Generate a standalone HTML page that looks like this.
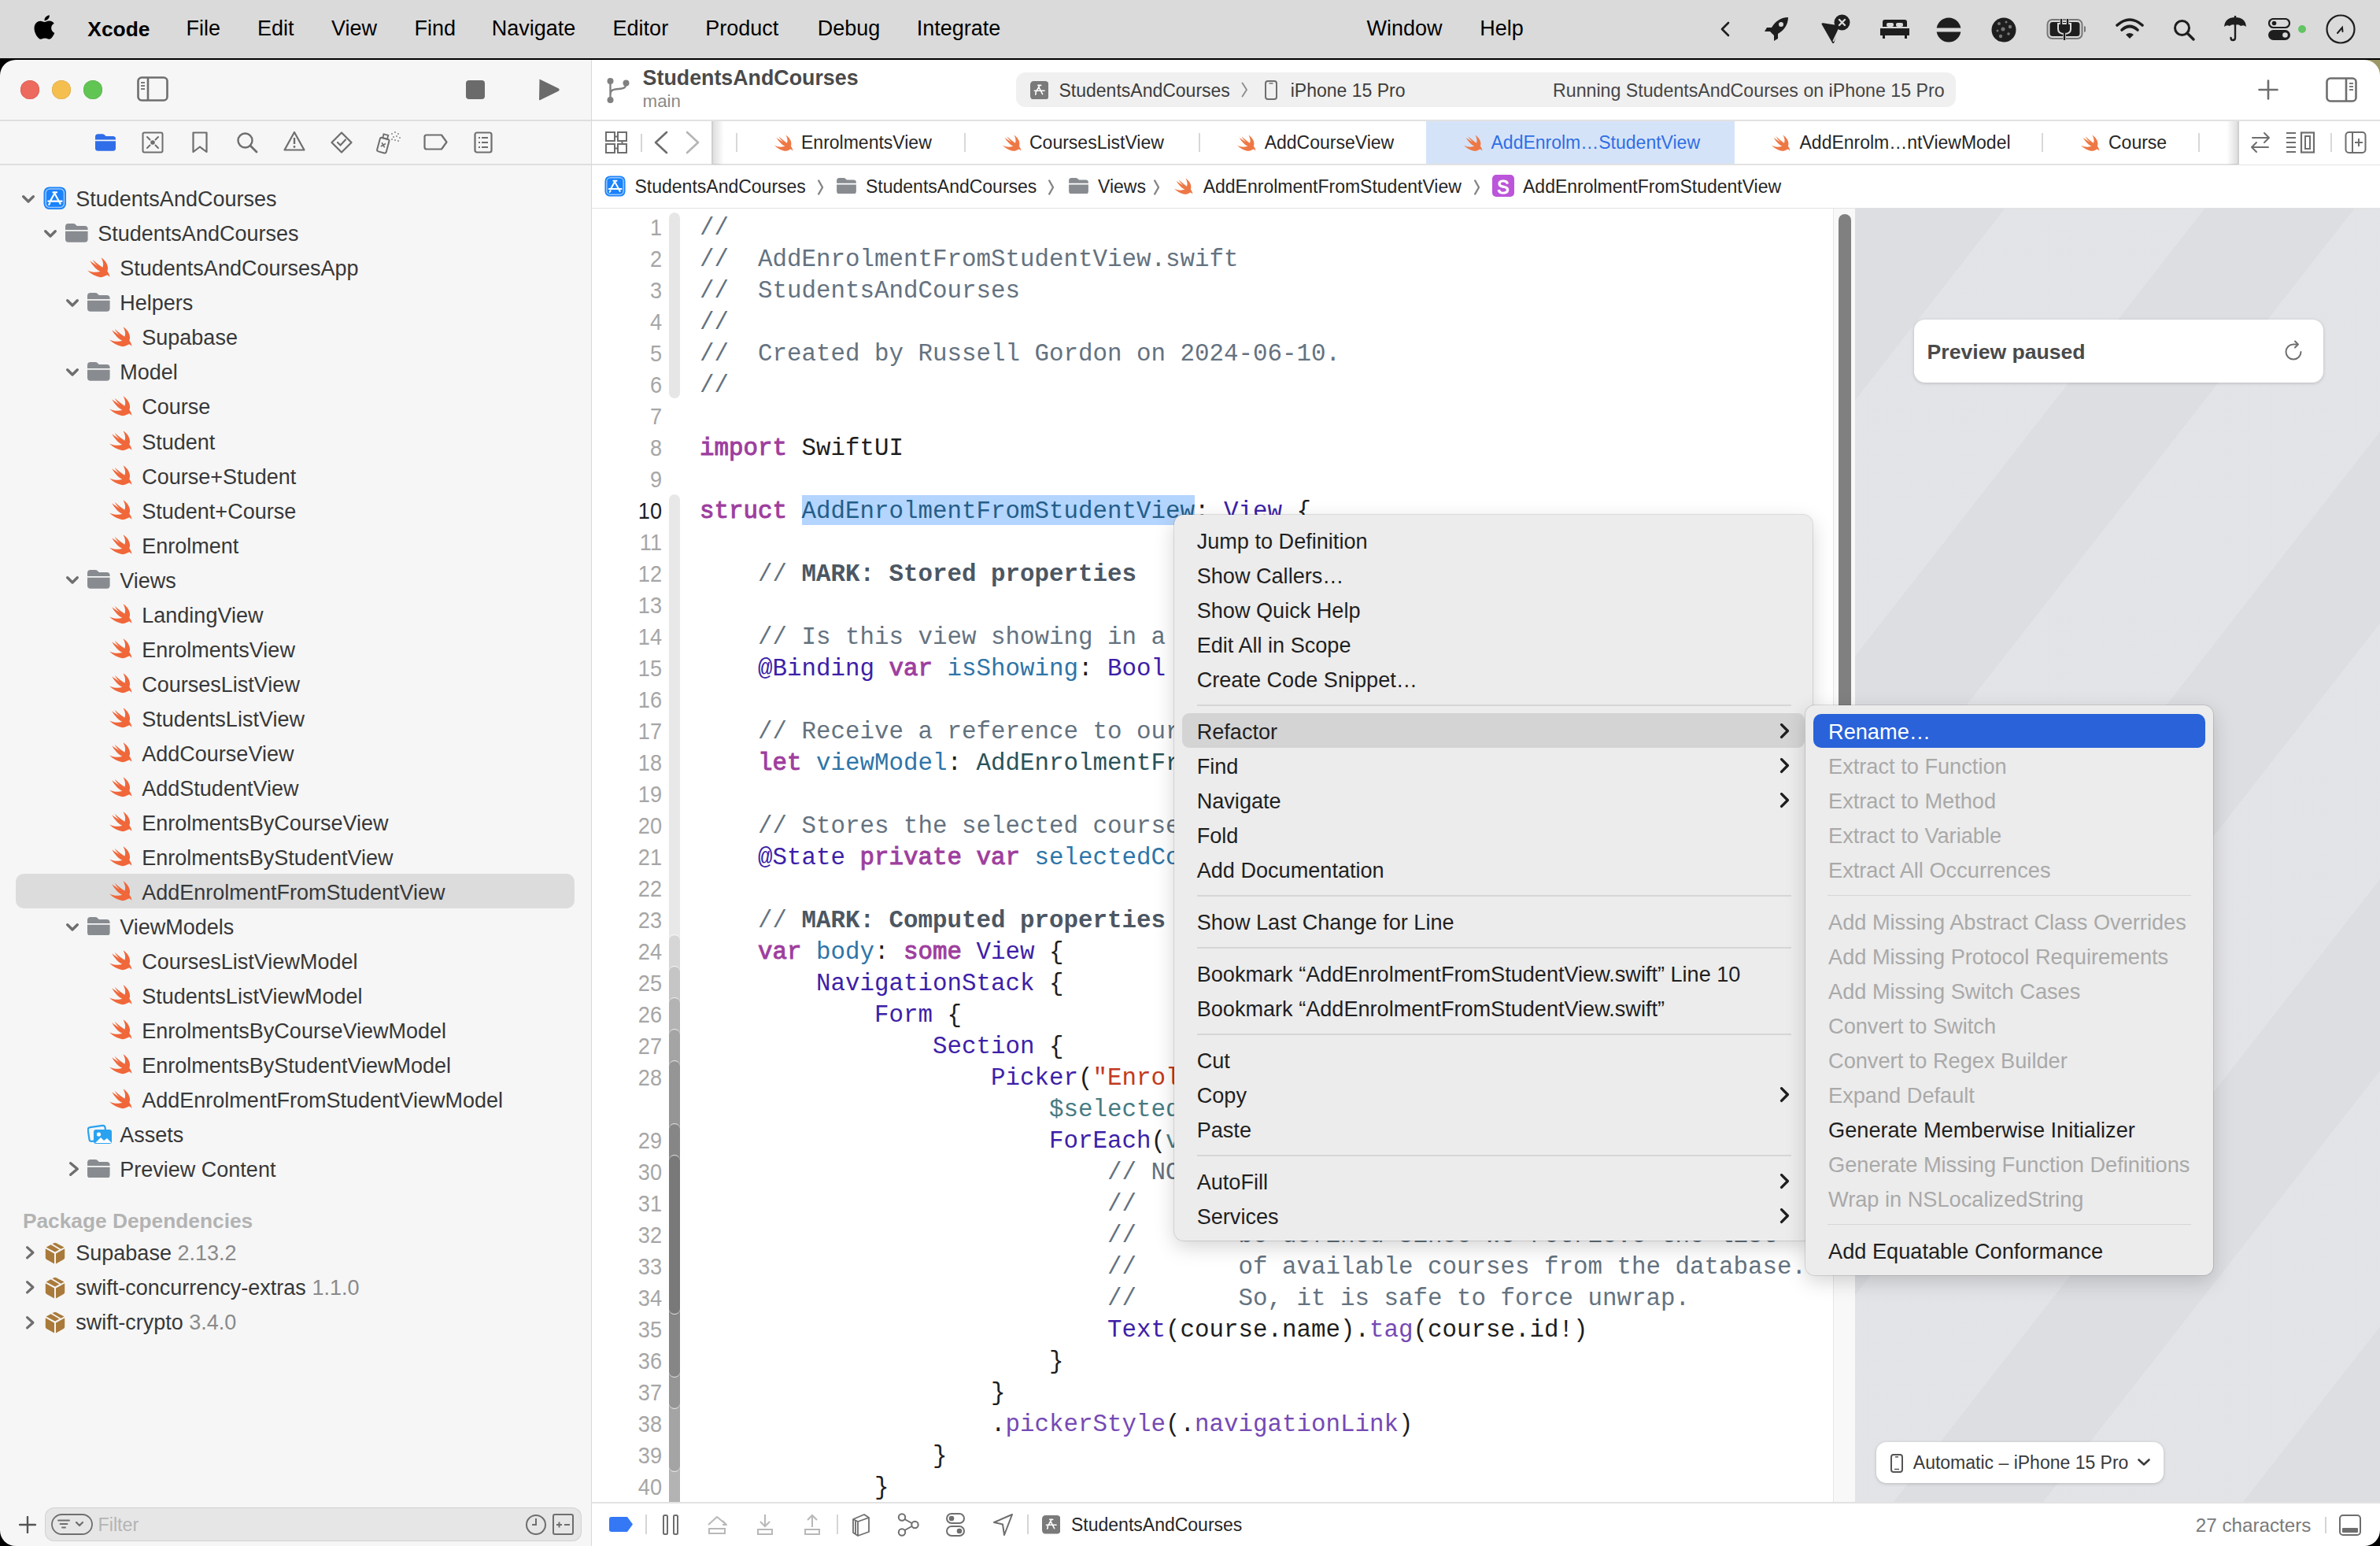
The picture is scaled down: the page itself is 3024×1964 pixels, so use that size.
<!DOCTYPE html><html><head><meta charset="utf-8"><style>html,body{margin:0;padding:0;width:3024px;height:1964px;overflow:hidden;background:#000;}.t{position:absolute;white-space:pre;}.r{position:absolute;}</style></head><body>
<div class="r" style="left:2900.0px;top:60.0px;width:124.0px;height:80.0px;background:#9c9868;"></div>
<div class="r" style="left:0.0px;top:0.0px;width:3024.0px;height:73.5px;background:#dadada;"></div>
<svg class="r" style="left:39.9px;top:17.3px;overflow:visible" width="30.5" height="34.9" viewBox="0 0 27 32" preserveAspectRatio="none"><path fill="#000" d="M22.3,17.1c0-3.6,3-5.3,3.1-5.4c-1.7-2.5-4.3-2.8-5.2-2.9c-2.2-0.2-4.3,1.3-5.4,1.3c-1.1,0-2.8-1.3-4.7-1.2c-2.4,0-4.6,1.4-5.8,3.5c-2.5,4.3-0.6,10.7,1.8,14.2c1.2,1.7,2.6,3.6,4.4,3.5c1.8-0.1,2.4-1.1,4.6-1.1c2.1,0,2.7,1.1,4.6,1.1c1.9,0,3.1-1.7,4.3-3.5c1.4-2,1.9-3.9,1.9-4C25.9,22.6,22.3,21.2,22.3,17.1z M18.8,6.5c1-1.2,1.6-2.8,1.4-4.5c-1.4,0.1-3.1,0.9-4.1,2.1c-0.9,1-1.7,2.7-1.5,4.3C16.2,8.6,17.8,7.7,18.8,6.5z"/></svg>
<div class="t" style="left:111.3px;top:19.9px;font-family:'Liberation Sans', sans-serif;font-size:26.4px;line-height:34px;color:#000;font-weight:700;">Xcode</div>
<div class="t" style="left:236.6px;top:19.1px;font-family:'Liberation Sans', sans-serif;font-size:27px;line-height:35px;color:#000;font-weight:400;">File</div>
<div class="t" style="left:326.9px;top:19.1px;font-family:'Liberation Sans', sans-serif;font-size:27px;line-height:35px;color:#000;font-weight:400;">Edit</div>
<div class="t" style="left:421.0px;top:19.1px;font-family:'Liberation Sans', sans-serif;font-size:27px;line-height:35px;color:#000;font-weight:400;">View</div>
<div class="t" style="left:526.5px;top:19.1px;font-family:'Liberation Sans', sans-serif;font-size:27px;line-height:35px;color:#000;font-weight:400;">Find</div>
<div class="t" style="left:624.8px;top:19.1px;font-family:'Liberation Sans', sans-serif;font-size:27px;line-height:35px;color:#000;font-weight:400;">Navigate</div>
<div class="t" style="left:778.6px;top:19.1px;font-family:'Liberation Sans', sans-serif;font-size:27px;line-height:35px;color:#000;font-weight:400;">Editor</div>
<div class="t" style="left:896.2px;top:19.1px;font-family:'Liberation Sans', sans-serif;font-size:27px;line-height:35px;color:#000;font-weight:400;">Product</div>
<div class="t" style="left:1038.7px;top:19.1px;font-family:'Liberation Sans', sans-serif;font-size:27px;line-height:35px;color:#000;font-weight:400;">Debug</div>
<div class="t" style="left:1164.7px;top:19.1px;font-family:'Liberation Sans', sans-serif;font-size:27px;line-height:35px;color:#000;font-weight:400;">Integrate</div>
<div class="t" style="left:1736.6px;top:19.1px;font-family:'Liberation Sans', sans-serif;font-size:27px;line-height:35px;color:#000;font-weight:400;">Window</div>
<div class="t" style="left:1880.3px;top:19.1px;font-family:'Liberation Sans', sans-serif;font-size:27px;line-height:35px;color:#000;font-weight:400;">Help</div>
<div class="r" style="left:0.0px;top:73.5px;width:3024.0px;height:3.0px;background:#000;"></div>
<div class="r" style="left:0.0px;top:76.0px;width:751.0px;height:1888.0px;background:#f6f6f6;"></div>
<div class="r" style="left:751.0px;top:76.0px;width:1.0px;height:1888.0px;background:#d9d9d9;"></div>
<div class="r" style="left:752.0px;top:76.0px;width:2272.0px;height:1888.0px;background:#ffffff;"></div>
<div class="r" style="left:26px;top:102px;width:24px;height:24px;border-radius:12px;background:#ec6a5e;box-shadow:inset 0 0 0 0.5px #d25545"></div>
<div class="r" style="left:66px;top:102px;width:24px;height:24px;border-radius:12px;background:#f4bf4f;box-shadow:inset 0 0 0 0.5px #d6a243"></div>
<div class="r" style="left:106px;top:102px;width:24px;height:24px;border-radius:12px;background:#61c554;box-shadow:inset 0 0 0 0.5px #52a842"></div>
<svg class="r" style="left:174.0px;top:97.0px;" width="40" height="32" viewBox="0 0 40 32"><rect x="1.5" y="1.5" width="37" height="29" rx="4.5" fill="none" stroke="#6e6e6e" stroke-width="2.6"/><line x1="14" y1="2" x2="14" y2="30" stroke="#6e6e6e" stroke-width="2.6"/><line x1="5" y1="8" x2="10" y2="8" stroke="#6e6e6e" stroke-width="1.8"/><line x1="5" y1="12" x2="10" y2="12" stroke="#6e6e6e" stroke-width="1.8"/><line x1="5" y1="16" x2="10" y2="16" stroke="#6e6e6e" stroke-width="1.8"/></svg>
<div class="r" style="left:592.0px;top:101.8px;width:24.0px;height:24.2px;background:#6b6b6b;border-radius:4px"></div>
<svg class="r" style="left:684.0px;top:100.0px;" width="28" height="28" viewBox="0 0 28 28"><path d="M1.5,1.5 Q0.8,0.3 2.5,1 L26,12.5 Q27.5,14 26,15.5 L2.5,27 Q0.8,27.8 1,26 Z" fill="#6b6b6b"/></svg>
<div class="r" style="left:0.0px;top:152.0px;width:751.0px;height:1.5px;background:#dedede;"></div>
<div class="r" style="left:0.0px;top:208.0px;width:751.0px;height:1.5px;background:#dedede;"></div>
<svg class="r" style="left:121.0px;top:169.9px;" width="26" height="22" viewBox="0 0 29 24"><path fill="#2f6ee8" d="M0,4 Q0,0 4,0 L10,0 Q12,0 13.5,1.5 L15,3 L25,3 Q29,3 29,7 L29,8 L0,8 Z"/><path fill="#2f6ee8" d="M0,10 L29,10 L29,20 Q29,24 25,24 L4,24 Q0,24 0,20 Z"/></svg>
<svg class="r" style="left:180.0px;top:167.0px;" width="28" height="28" viewBox="0 0 28 28"><rect x="1.5" y="1.5" width="25" height="25" rx="2" fill="none" stroke="#6e6e6e" stroke-width="2"/><circle cx="14" cy="14" r="2.8" fill="#6e6e6e"/><path d="M7,7 L10.5,10.5 M21,7 L17.5,10.5 M7,21 L10.5,17.5 M21,21 L17.5,17.5" stroke="#6e6e6e" stroke-width="2" stroke-linecap="round"/></svg>
<svg class="r" style="left:244.0px;top:167.0px;" width="20" height="28" viewBox="0 0 20 28"><path d="M1.5,1.5 L18.5,1.5 L18.5,26 L10,19.5 L1.5,26 Z" fill="none" stroke="#6e6e6e" stroke-width="2.2" stroke-linejoin="round"/></svg>
<svg class="r" style="left:300.0px;top:167.0px;" width="28" height="28" viewBox="0 0 28 28"><circle cx="11.5" cy="11.5" r="9" fill="none" stroke="#6e6e6e" stroke-width="2.4"/><line x1="18" y1="18" x2="26" y2="26" stroke="#6e6e6e" stroke-width="2.8" stroke-linecap="round"/></svg>
<svg class="r" style="left:360.0px;top:166.0px;" width="28" height="27" viewBox="0 0 28 27"><path d="M14,2 L26.5,24.5 L1.5,24.5 Z" fill="none" stroke="#6e6e6e" stroke-width="2.2" stroke-linejoin="round"/><line x1="14" y1="9" x2="14" y2="17" stroke="#6e6e6e" stroke-width="2.4"/><circle cx="14" cy="20.5" r="1.4" fill="#6e6e6e"/></svg>
<svg class="r" style="left:420.0px;top:167.0px;" width="28" height="28" viewBox="0 0 28 28"><path d="M14,1.5 L26.5,14 L14,26.5 L1.5,14 Z" fill="none" stroke="#6e6e6e" stroke-width="2.2" stroke-linejoin="round"/><path d="M9,14 L12.5,17.5 L19,10.5" fill="none" stroke="#6e6e6e" stroke-width="2.2" stroke-linecap="round"/></svg>
<svg class="r" style="left:478.0px;top:166.0px;" width="32" height="30" viewBox="0 0 32 30"><g transform="rotate(15 10 18)"><rect x="3" y="10" width="12" height="18" rx="2" fill="none" stroke="#6e6e6e" stroke-width="2"/><rect x="6" y="5" width="6" height="5" fill="none" stroke="#6e6e6e" stroke-width="1.8"/><path d="M6.5,16 L11.5,21 M11.5,16 L6.5,21" stroke="#6e6e6e" stroke-width="1.6"/></g><g fill="#888"><circle cx="20" cy="4" r="1"/><circle cx="24" cy="2" r="1"/><circle cx="28" cy="4" r="1"/><circle cx="22" cy="8" r="1"/><circle cx="26" cy="7" r="1"/><circle cx="30" cy="9" r="1"/><circle cx="24" cy="12" r="1"/><circle cx="28" cy="13" r="1"/><circle cx="20" cy="11" r="1"/></g></svg>
<svg class="r" style="left:538.0px;top:170.0px;" width="31" height="21" viewBox="0 0 31 21"><path d="M1.5,4 Q1.5,1.5 4,1.5 L23,1.5 L29.5,10.5 L23,19.5 L4,19.5 Q1.5,19.5 1.5,17 Z" fill="none" stroke="#6e6e6e" stroke-width="2.2" stroke-linejoin="round"/></svg>
<svg class="r" style="left:602.0px;top:167.0px;" width="24" height="28" viewBox="0 0 24 28"><rect x="1.5" y="1.5" width="21" height="25" rx="2.5" fill="none" stroke="#6e6e6e" stroke-width="2.2"/><g stroke="#6e6e6e" stroke-width="2"><line x1="6" y1="8" x2="8" y2="8"/><line x1="10" y1="8" x2="18" y2="8"/><line x1="6" y1="14" x2="8" y2="14"/><line x1="10" y1="14" x2="18" y2="14"/><line x1="6" y1="20" x2="8" y2="20"/><line x1="10" y1="20" x2="18" y2="20"/></g></svg>
<div class="r" style="left:20.0px;top:1110.4px;width:710.0px;height:43.5px;background:#dcdcdc;border-radius:10px"></div>
<svg class="r" style="left:28.0px;top:247.9px;overflow:visible" width="16" height="9.7" viewBox="0 0 16 9.7"><path d="M1.7,1.7 L8.0,7.999999999999999 L14.3,1.7" fill="none" stroke="#6e6e6e" stroke-width="3.4" stroke-linecap="round" stroke-linejoin="round"/></svg>
<svg class="r" style="left:54.5px;top:237.0px;" width="29.5" height="29.5" viewBox="0 0 29 29"><rect x="0.5" y="0.5" width="28" height="28" rx="7" fill="#1a82fb"/><rect x="3" y="3" width="23" height="23" rx="5" fill="none" stroke="#fff" stroke-opacity="0.55" stroke-width="1.6"/><path d="M12.2,7.2 L16.8,7.2 M14.6,7.6 L9.2,17.2 M14.2,8.6 L21.2,21.4 M6.2,18.3 L23.2,18.3 M8.2,20.6 L7.2,22.4" stroke="#fff" stroke-width="2.1" stroke-linecap="round" fill="none"/></svg>
<div class="t" style="left:96.3px;top:236.2px;font-family:'Liberation Sans', sans-serif;font-size:27px;line-height:35px;color:#383838;font-weight:400;">StudentsAndCourses</div>
<svg class="r" style="left:56.0px;top:291.9px;overflow:visible" width="16" height="9.7" viewBox="0 0 16 9.7"><path d="M1.7,1.7 L8.0,7.999999999999999 L14.3,1.7" fill="none" stroke="#6e6e6e" stroke-width="3.4" stroke-linecap="round" stroke-linejoin="round"/></svg>
<svg class="r" style="left:83.0px;top:284.0px;" width="28.6" height="23.7" viewBox="0 0 29 24"><path fill="#888c91" d="M0,4 Q0,0 4,0 L10,0 Q12,0 13.5,1.5 L15,3 L25,3 Q29,3 29,7 L29,8 L0,8 Z"/><path fill="#888c91" d="M0,10 L29,10 L29,20 Q29,24 25,24 L4,24 Q0,24 0,20 Z"/></svg>
<div class="t" style="left:124.3px;top:280.3px;font-family:'Liberation Sans', sans-serif;font-size:27px;line-height:35px;color:#383838;font-weight:400;">StudentsAndCourses</div>
<svg class="r" style="left:111.1px;top:326.7px;overflow:visible" width="28.6" height="25.2" viewBox="0 0 1300 1145"><path fill="#f0673a" d="M0,750 C200,950 450,1080 700,1140 C850,1160 1000,1080 1150,1010 L1300,1130 C1260,980 1220,880 1150,800 C1250,600 1150,250 800,15 C920,250 950,430 880,580 C700,450 450,260 300,120 C400,300 520,430 620,520 C450,400 250,280 140,195 C300,450 500,700 740,810 C550,880 250,880 0,750 Z"/></svg>
<div class="t" style="left:152.3px;top:324.3px;font-family:'Liberation Sans', sans-serif;font-size:27px;line-height:35px;color:#383838;font-weight:400;">StudentsAndCoursesApp</div>
<svg class="r" style="left:84.0px;top:380.0px;overflow:visible" width="16" height="9.7" viewBox="0 0 16 9.7"><path d="M1.7,1.7 L8.0,7.999999999999999 L14.3,1.7" fill="none" stroke="#6e6e6e" stroke-width="3.4" stroke-linecap="round" stroke-linejoin="round"/></svg>
<svg class="r" style="left:111.0px;top:372.1px;" width="28.6" height="23.7" viewBox="0 0 29 24"><path fill="#888c91" d="M0,4 Q0,0 4,0 L10,0 Q12,0 13.5,1.5 L15,3 L25,3 Q29,3 29,7 L29,8 L0,8 Z"/><path fill="#888c91" d="M0,10 L29,10 L29,20 Q29,24 25,24 L4,24 Q0,24 0,20 Z"/></svg>
<div class="t" style="left:152.3px;top:368.3px;font-family:'Liberation Sans', sans-serif;font-size:27px;line-height:35px;color:#383838;font-weight:400;">Helpers</div>
<svg class="r" style="left:139.1px;top:414.7px;overflow:visible" width="28.6" height="25.2" viewBox="0 0 1300 1145"><path fill="#f0673a" d="M0,750 C200,950 450,1080 700,1140 C850,1160 1000,1080 1150,1010 L1300,1130 C1260,980 1220,880 1150,800 C1250,600 1150,250 800,15 C920,250 950,430 880,580 C700,450 450,260 300,120 C400,300 520,430 620,520 C450,400 250,280 140,195 C300,450 500,700 740,810 C550,880 250,880 0,750 Z"/></svg>
<div class="t" style="left:180.3px;top:412.4px;font-family:'Liberation Sans', sans-serif;font-size:27px;line-height:35px;color:#383838;font-weight:400;">Supabase</div>
<svg class="r" style="left:84.0px;top:468.1px;overflow:visible" width="16" height="9.7" viewBox="0 0 16 9.7"><path d="M1.7,1.7 L8.0,7.999999999999999 L14.3,1.7" fill="none" stroke="#6e6e6e" stroke-width="3.4" stroke-linecap="round" stroke-linejoin="round"/></svg>
<svg class="r" style="left:111.0px;top:460.2px;" width="28.6" height="23.7" viewBox="0 0 29 24"><path fill="#888c91" d="M0,4 Q0,0 4,0 L10,0 Q12,0 13.5,1.5 L15,3 L25,3 Q29,3 29,7 L29,8 L0,8 Z"/><path fill="#888c91" d="M0,10 L29,10 L29,20 Q29,24 25,24 L4,24 Q0,24 0,20 Z"/></svg>
<div class="t" style="left:152.3px;top:456.4px;font-family:'Liberation Sans', sans-serif;font-size:27px;line-height:35px;color:#383838;font-weight:400;">Model</div>
<svg class="r" style="left:139.1px;top:502.8px;overflow:visible" width="28.6" height="25.2" viewBox="0 0 1300 1145"><path fill="#f0673a" d="M0,750 C200,950 450,1080 700,1140 C850,1160 1000,1080 1150,1010 L1300,1130 C1260,980 1220,880 1150,800 C1250,600 1150,250 800,15 C920,250 950,430 880,580 C700,450 450,260 300,120 C400,300 520,430 620,520 C450,400 250,280 140,195 C300,450 500,700 740,810 C550,880 250,880 0,750 Z"/></svg>
<div class="t" style="left:180.3px;top:500.4px;font-family:'Liberation Sans', sans-serif;font-size:27px;line-height:35px;color:#383838;font-weight:400;">Course</div>
<svg class="r" style="left:139.1px;top:546.8px;overflow:visible" width="28.6" height="25.2" viewBox="0 0 1300 1145"><path fill="#f0673a" d="M0,750 C200,950 450,1080 700,1140 C850,1160 1000,1080 1150,1010 L1300,1130 C1260,980 1220,880 1150,800 C1250,600 1150,250 800,15 C920,250 950,430 880,580 C700,450 450,260 300,120 C400,300 520,430 620,520 C450,400 250,280 140,195 C300,450 500,700 740,810 C550,880 250,880 0,750 Z"/></svg>
<div class="t" style="left:180.3px;top:544.5px;font-family:'Liberation Sans', sans-serif;font-size:27px;line-height:35px;color:#383838;font-weight:400;">Student</div>
<svg class="r" style="left:139.1px;top:590.8px;overflow:visible" width="28.6" height="25.2" viewBox="0 0 1300 1145"><path fill="#f0673a" d="M0,750 C200,950 450,1080 700,1140 C850,1160 1000,1080 1150,1010 L1300,1130 C1260,980 1220,880 1150,800 C1250,600 1150,250 800,15 C920,250 950,430 880,580 C700,450 450,260 300,120 C400,300 520,430 620,520 C450,400 250,280 140,195 C300,450 500,700 740,810 C550,880 250,880 0,750 Z"/></svg>
<div class="t" style="left:180.3px;top:588.5px;font-family:'Liberation Sans', sans-serif;font-size:27px;line-height:35px;color:#383838;font-weight:400;">Course+Student</div>
<svg class="r" style="left:139.1px;top:634.9px;overflow:visible" width="28.6" height="25.2" viewBox="0 0 1300 1145"><path fill="#f0673a" d="M0,750 C200,950 450,1080 700,1140 C850,1160 1000,1080 1150,1010 L1300,1130 C1260,980 1220,880 1150,800 C1250,600 1150,250 800,15 C920,250 950,430 880,580 C700,450 450,260 300,120 C400,300 520,430 620,520 C450,400 250,280 140,195 C300,450 500,700 740,810 C550,880 250,880 0,750 Z"/></svg>
<div class="t" style="left:180.3px;top:632.5px;font-family:'Liberation Sans', sans-serif;font-size:27px;line-height:35px;color:#383838;font-weight:400;">Student+Course</div>
<svg class="r" style="left:139.1px;top:678.9px;overflow:visible" width="28.6" height="25.2" viewBox="0 0 1300 1145"><path fill="#f0673a" d="M0,750 C200,950 450,1080 700,1140 C850,1160 1000,1080 1150,1010 L1300,1130 C1260,980 1220,880 1150,800 C1250,600 1150,250 800,15 C920,250 950,430 880,580 C700,450 450,260 300,120 C400,300 520,430 620,520 C450,400 250,280 140,195 C300,450 500,700 740,810 C550,880 250,880 0,750 Z"/></svg>
<div class="t" style="left:180.3px;top:676.5px;font-family:'Liberation Sans', sans-serif;font-size:27px;line-height:35px;color:#383838;font-weight:400;">Enrolment</div>
<svg class="r" style="left:84.0px;top:732.2px;overflow:visible" width="16" height="9.7" viewBox="0 0 16 9.7"><path d="M1.7,1.7 L8.0,7.999999999999999 L14.3,1.7" fill="none" stroke="#6e6e6e" stroke-width="3.4" stroke-linecap="round" stroke-linejoin="round"/></svg>
<svg class="r" style="left:111.0px;top:724.3px;" width="28.6" height="23.7" viewBox="0 0 29 24"><path fill="#888c91" d="M0,4 Q0,0 4,0 L10,0 Q12,0 13.5,1.5 L15,3 L25,3 Q29,3 29,7 L29,8 L0,8 Z"/><path fill="#888c91" d="M0,10 L29,10 L29,20 Q29,24 25,24 L4,24 Q0,24 0,20 Z"/></svg>
<div class="t" style="left:152.3px;top:720.6px;font-family:'Liberation Sans', sans-serif;font-size:27px;line-height:35px;color:#383838;font-weight:400;">Views</div>
<svg class="r" style="left:139.1px;top:767.0px;overflow:visible" width="28.6" height="25.2" viewBox="0 0 1300 1145"><path fill="#f0673a" d="M0,750 C200,950 450,1080 700,1140 C850,1160 1000,1080 1150,1010 L1300,1130 C1260,980 1220,880 1150,800 C1250,600 1150,250 800,15 C920,250 950,430 880,580 C700,450 450,260 300,120 C400,300 520,430 620,520 C450,400 250,280 140,195 C300,450 500,700 740,810 C550,880 250,880 0,750 Z"/></svg>
<div class="t" style="left:180.3px;top:764.6px;font-family:'Liberation Sans', sans-serif;font-size:27px;line-height:35px;color:#383838;font-weight:400;">LandingView</div>
<svg class="r" style="left:139.1px;top:811.0px;overflow:visible" width="28.6" height="25.2" viewBox="0 0 1300 1145"><path fill="#f0673a" d="M0,750 C200,950 450,1080 700,1140 C850,1160 1000,1080 1150,1010 L1300,1130 C1260,980 1220,880 1150,800 C1250,600 1150,250 800,15 C920,250 950,430 880,580 C700,450 450,260 300,120 C400,300 520,430 620,520 C450,400 250,280 140,195 C300,450 500,700 740,810 C550,880 250,880 0,750 Z"/></svg>
<div class="t" style="left:180.3px;top:808.6px;font-family:'Liberation Sans', sans-serif;font-size:27px;line-height:35px;color:#383838;font-weight:400;">EnrolmentsView</div>
<svg class="r" style="left:139.1px;top:855.0px;overflow:visible" width="28.6" height="25.2" viewBox="0 0 1300 1145"><path fill="#f0673a" d="M0,750 C200,950 450,1080 700,1140 C850,1160 1000,1080 1150,1010 L1300,1130 C1260,980 1220,880 1150,800 C1250,600 1150,250 800,15 C920,250 950,430 880,580 C700,450 450,260 300,120 C400,300 520,430 620,520 C450,400 250,280 140,195 C300,450 500,700 740,810 C550,880 250,880 0,750 Z"/></svg>
<div class="t" style="left:180.3px;top:852.7px;font-family:'Liberation Sans', sans-serif;font-size:27px;line-height:35px;color:#383838;font-weight:400;">CoursesListView</div>
<svg class="r" style="left:139.1px;top:899.0px;overflow:visible" width="28.6" height="25.2" viewBox="0 0 1300 1145"><path fill="#f0673a" d="M0,750 C200,950 450,1080 700,1140 C850,1160 1000,1080 1150,1010 L1300,1130 C1260,980 1220,880 1150,800 C1250,600 1150,250 800,15 C920,250 950,430 880,580 C700,450 450,260 300,120 C400,300 520,430 620,520 C450,400 250,280 140,195 C300,450 500,700 740,810 C550,880 250,880 0,750 Z"/></svg>
<div class="t" style="left:180.3px;top:896.7px;font-family:'Liberation Sans', sans-serif;font-size:27px;line-height:35px;color:#383838;font-weight:400;">StudentsListView</div>
<svg class="r" style="left:139.1px;top:943.1px;overflow:visible" width="28.6" height="25.2" viewBox="0 0 1300 1145"><path fill="#f0673a" d="M0,750 C200,950 450,1080 700,1140 C850,1160 1000,1080 1150,1010 L1300,1130 C1260,980 1220,880 1150,800 C1250,600 1150,250 800,15 C920,250 950,430 880,580 C700,450 450,260 300,120 C400,300 520,430 620,520 C450,400 250,280 140,195 C300,450 500,700 740,810 C550,880 250,880 0,750 Z"/></svg>
<div class="t" style="left:180.3px;top:940.7px;font-family:'Liberation Sans', sans-serif;font-size:27px;line-height:35px;color:#383838;font-weight:400;">AddCourseView</div>
<svg class="r" style="left:139.1px;top:987.1px;overflow:visible" width="28.6" height="25.2" viewBox="0 0 1300 1145"><path fill="#f0673a" d="M0,750 C200,950 450,1080 700,1140 C850,1160 1000,1080 1150,1010 L1300,1130 C1260,980 1220,880 1150,800 C1250,600 1150,250 800,15 C920,250 950,430 880,580 C700,450 450,260 300,120 C400,300 520,430 620,520 C450,400 250,280 140,195 C300,450 500,700 740,810 C550,880 250,880 0,750 Z"/></svg>
<div class="t" style="left:180.3px;top:984.8px;font-family:'Liberation Sans', sans-serif;font-size:27px;line-height:35px;color:#383838;font-weight:400;">AddStudentView</div>
<svg class="r" style="left:139.1px;top:1031.1px;overflow:visible" width="28.6" height="25.2" viewBox="0 0 1300 1145"><path fill="#f0673a" d="M0,750 C200,950 450,1080 700,1140 C850,1160 1000,1080 1150,1010 L1300,1130 C1260,980 1220,880 1150,800 C1250,600 1150,250 800,15 C920,250 950,430 880,580 C700,450 450,260 300,120 C400,300 520,430 620,520 C450,400 250,280 140,195 C300,450 500,700 740,810 C550,880 250,880 0,750 Z"/></svg>
<div class="t" style="left:180.3px;top:1028.8px;font-family:'Liberation Sans', sans-serif;font-size:27px;line-height:35px;color:#383838;font-weight:400;">EnrolmentsByCourseView</div>
<svg class="r" style="left:139.1px;top:1075.2px;overflow:visible" width="28.6" height="25.2" viewBox="0 0 1300 1145"><path fill="#f0673a" d="M0,750 C200,950 450,1080 700,1140 C850,1160 1000,1080 1150,1010 L1300,1130 C1260,980 1220,880 1150,800 C1250,600 1150,250 800,15 C920,250 950,430 880,580 C700,450 450,260 300,120 C400,300 520,430 620,520 C450,400 250,280 140,195 C300,450 500,700 740,810 C550,880 250,880 0,750 Z"/></svg>
<div class="t" style="left:180.3px;top:1072.8px;font-family:'Liberation Sans', sans-serif;font-size:27px;line-height:35px;color:#383838;font-weight:400;">EnrolmentsByStudentView</div>
<svg class="r" style="left:139.1px;top:1119.2px;overflow:visible" width="28.6" height="25.2" viewBox="0 0 1300 1145"><path fill="#f0673a" d="M0,750 C200,950 450,1080 700,1140 C850,1160 1000,1080 1150,1010 L1300,1130 C1260,980 1220,880 1150,800 C1250,600 1150,250 800,15 C920,250 950,430 880,580 C700,450 450,260 300,120 C400,300 520,430 620,520 C450,400 250,280 140,195 C300,450 500,700 740,810 C550,880 250,880 0,750 Z"/></svg>
<div class="t" style="left:180.3px;top:1116.8px;font-family:'Liberation Sans', sans-serif;font-size:27px;line-height:35px;color:#383838;font-weight:400;">AddEnrolmentFromStudentView</div>
<svg class="r" style="left:84.0px;top:1172.5px;overflow:visible" width="16" height="9.7" viewBox="0 0 16 9.7"><path d="M1.7,1.7 L8.0,7.999999999999999 L14.3,1.7" fill="none" stroke="#6e6e6e" stroke-width="3.4" stroke-linecap="round" stroke-linejoin="round"/></svg>
<svg class="r" style="left:111.0px;top:1164.6px;" width="28.6" height="23.7" viewBox="0 0 29 24"><path fill="#888c91" d="M0,4 Q0,0 4,0 L10,0 Q12,0 13.5,1.5 L15,3 L25,3 Q29,3 29,7 L29,8 L0,8 Z"/><path fill="#888c91" d="M0,10 L29,10 L29,20 Q29,24 25,24 L4,24 Q0,24 0,20 Z"/></svg>
<div class="t" style="left:152.3px;top:1160.9px;font-family:'Liberation Sans', sans-serif;font-size:27px;line-height:35px;color:#383838;font-weight:400;">ViewModels</div>
<svg class="r" style="left:139.1px;top:1207.3px;overflow:visible" width="28.6" height="25.2" viewBox="0 0 1300 1145"><path fill="#f0673a" d="M0,750 C200,950 450,1080 700,1140 C850,1160 1000,1080 1150,1010 L1300,1130 C1260,980 1220,880 1150,800 C1250,600 1150,250 800,15 C920,250 950,430 880,580 C700,450 450,260 300,120 C400,300 520,430 620,520 C450,400 250,280 140,195 C300,450 500,700 740,810 C550,880 250,880 0,750 Z"/></svg>
<div class="t" style="left:180.3px;top:1204.9px;font-family:'Liberation Sans', sans-serif;font-size:27px;line-height:35px;color:#383838;font-weight:400;">CoursesListViewModel</div>
<svg class="r" style="left:139.1px;top:1251.3px;overflow:visible" width="28.6" height="25.2" viewBox="0 0 1300 1145"><path fill="#f0673a" d="M0,750 C200,950 450,1080 700,1140 C850,1160 1000,1080 1150,1010 L1300,1130 C1260,980 1220,880 1150,800 C1250,600 1150,250 800,15 C920,250 950,430 880,580 C700,450 450,260 300,120 C400,300 520,430 620,520 C450,400 250,280 140,195 C300,450 500,700 740,810 C550,880 250,880 0,750 Z"/></svg>
<div class="t" style="left:180.3px;top:1248.9px;font-family:'Liberation Sans', sans-serif;font-size:27px;line-height:35px;color:#383838;font-weight:400;">StudentsListViewModel</div>
<svg class="r" style="left:139.1px;top:1295.3px;overflow:visible" width="28.6" height="25.2" viewBox="0 0 1300 1145"><path fill="#f0673a" d="M0,750 C200,950 450,1080 700,1140 C850,1160 1000,1080 1150,1010 L1300,1130 C1260,980 1220,880 1150,800 C1250,600 1150,250 800,15 C920,250 950,430 880,580 C700,450 450,260 300,120 C400,300 520,430 620,520 C450,400 250,280 140,195 C300,450 500,700 740,810 C550,880 250,880 0,750 Z"/></svg>
<div class="t" style="left:180.3px;top:1293.0px;font-family:'Liberation Sans', sans-serif;font-size:27px;line-height:35px;color:#383838;font-weight:400;">EnrolmentsByCourseViewModel</div>
<svg class="r" style="left:139.1px;top:1339.3px;overflow:visible" width="28.6" height="25.2" viewBox="0 0 1300 1145"><path fill="#f0673a" d="M0,750 C200,950 450,1080 700,1140 C850,1160 1000,1080 1150,1010 L1300,1130 C1260,980 1220,880 1150,800 C1250,600 1150,250 800,15 C920,250 950,430 880,580 C700,450 450,260 300,120 C400,300 520,430 620,520 C450,400 250,280 140,195 C300,450 500,700 740,810 C550,880 250,880 0,750 Z"/></svg>
<div class="t" style="left:180.3px;top:1337.0px;font-family:'Liberation Sans', sans-serif;font-size:27px;line-height:35px;color:#383838;font-weight:400;">EnrolmentsByStudentViewModel</div>
<svg class="r" style="left:139.1px;top:1383.4px;overflow:visible" width="28.6" height="25.2" viewBox="0 0 1300 1145"><path fill="#f0673a" d="M0,750 C200,950 450,1080 700,1140 C850,1160 1000,1080 1150,1010 L1300,1130 C1260,980 1220,880 1150,800 C1250,600 1150,250 800,15 C920,250 950,430 880,580 C700,450 450,260 300,120 C400,300 520,430 620,520 C450,400 250,280 140,195 C300,450 500,700 740,810 C550,880 250,880 0,750 Z"/></svg>
<div class="t" style="left:180.3px;top:1381.0px;font-family:'Liberation Sans', sans-serif;font-size:27px;line-height:35px;color:#383838;font-weight:400;">AddEnrolmentFromStudentViewModel</div>
<svg class="r" style="left:110.5px;top:1426.6px;" width="33" height="28" viewBox="0 0 33 28"><rect x="1.5" y="4" width="22" height="18" rx="3" fill="none" stroke="#2aa2f0" stroke-width="2.2" transform="rotate(-8 12 13)"/><rect x="8" y="8" width="23" height="18" rx="3" fill="#2aa2f0"/><circle cx="14.5" cy="14" r="2.6" fill="#fff"/><path d="M10,25 L17,18 L21,22 L25,19 L30,24 L30,25 Z" fill="#fff"/></svg>
<div class="t" style="left:152.3px;top:1425.1px;font-family:'Liberation Sans', sans-serif;font-size:27px;line-height:35px;color:#383838;font-weight:400;">Assets</div>
<svg class="r" style="left:88.0px;top:1476.1px;overflow:visible" width="12" height="18" viewBox="0 0 12 18"><path d="M1.7,1.7 L10.3,9.0 L1.7,16.3" fill="none" stroke="#6e6e6e" stroke-width="3.4" stroke-linecap="round" stroke-linejoin="round"/></svg>
<svg class="r" style="left:111.0px;top:1472.8px;" width="28.6" height="23.7" viewBox="0 0 29 24"><path fill="#888c91" d="M0,4 Q0,0 4,0 L10,0 Q12,0 13.5,1.5 L15,3 L25,3 Q29,3 29,7 L29,8 L0,8 Z"/><path fill="#888c91" d="M0,10 L29,10 L29,20 Q29,24 25,24 L4,24 Q0,24 0,20 Z"/></svg>
<div class="t" style="left:152.3px;top:1469.1px;font-family:'Liberation Sans', sans-serif;font-size:27px;line-height:35px;color:#383838;font-weight:400;">Preview Content</div>
<div class="t" style="left:28.9px;top:1534.4px;font-family:'Liberation Sans', sans-serif;font-size:26.3px;line-height:34px;color:#b3b3b3;font-weight:700;">Package Dependencies</div>
<svg class="r" style="left:33.0px;top:1583.4px;overflow:visible" width="10.5" height="16.5" viewBox="0 0 10.5 16.5"><path d="M1.6,1.6 L8.9,8.25 L1.6,14.9" fill="none" stroke="#6e6e6e" stroke-width="3.2" stroke-linecap="round" stroke-linejoin="round"/></svg>
<svg class="r" style="left:57.0px;top:1577.8px;" width="26" height="28" viewBox="0 0 26 28"><g fill="#a97a3a"><path d="M0.8,8.2 L12,14.4 L12,27.6 L2.2,22 Q0.8,21.2 0.8,19.6 Z"/><path d="M25.2,8.2 L14,14.4 L14,27.6 L23.8,22 Q25.2,21.2 25.2,19.6 Z"/><path d="M1.6,6.6 L7.6,3.3 L18.4,9.4 L13,12.4 Z"/><path d="M9.6,2.3 L11.6,1.2 Q13,0.5 14.4,1.2 L24.6,6.6 L20.4,8.8 Z"/></g></svg>
<div class="t" style="left:96.3px;top:1575.3px;font-family:'Liberation Sans', sans-serif;font-size:27px;line-height:35px;color:#383838;font-weight:400;">Supabase <span style="color:#8a8a8a">2.13.2</span></div>
<svg class="r" style="left:33.0px;top:1627.4px;overflow:visible" width="10.5" height="16.5" viewBox="0 0 10.5 16.5"><path d="M1.6,1.6 L8.9,8.25 L1.6,14.9" fill="none" stroke="#6e6e6e" stroke-width="3.2" stroke-linecap="round" stroke-linejoin="round"/></svg>
<svg class="r" style="left:57.0px;top:1621.8px;" width="26" height="28" viewBox="0 0 26 28"><g fill="#a97a3a"><path d="M0.8,8.2 L12,14.4 L12,27.6 L2.2,22 Q0.8,21.2 0.8,19.6 Z"/><path d="M25.2,8.2 L14,14.4 L14,27.6 L23.8,22 Q25.2,21.2 25.2,19.6 Z"/><path d="M1.6,6.6 L7.6,3.3 L18.4,9.4 L13,12.4 Z"/><path d="M9.6,2.3 L11.6,1.2 Q13,0.5 14.4,1.2 L24.6,6.6 L20.4,8.8 Z"/></g></svg>
<div class="t" style="left:96.3px;top:1619.4px;font-family:'Liberation Sans', sans-serif;font-size:27px;line-height:35px;color:#383838;font-weight:400;">swift-concurrency-extras <span style="color:#8a8a8a">1.1.0</span></div>
<svg class="r" style="left:33.0px;top:1671.5px;overflow:visible" width="10.5" height="16.5" viewBox="0 0 10.5 16.5"><path d="M1.6,1.6 L8.9,8.25 L1.6,14.9" fill="none" stroke="#6e6e6e" stroke-width="3.2" stroke-linecap="round" stroke-linejoin="round"/></svg>
<svg class="r" style="left:57.0px;top:1665.9px;" width="26" height="28" viewBox="0 0 26 28"><g fill="#a97a3a"><path d="M0.8,8.2 L12,14.4 L12,27.6 L2.2,22 Q0.8,21.2 0.8,19.6 Z"/><path d="M25.2,8.2 L14,14.4 L14,27.6 L23.8,22 Q25.2,21.2 25.2,19.6 Z"/><path d="M1.6,6.6 L7.6,3.3 L18.4,9.4 L13,12.4 Z"/><path d="M9.6,2.3 L11.6,1.2 Q13,0.5 14.4,1.2 L24.6,6.6 L20.4,8.8 Z"/></g></svg>
<div class="t" style="left:96.3px;top:1663.4px;font-family:'Liberation Sans', sans-serif;font-size:27px;line-height:35px;color:#383838;font-weight:400;">swift-crypto <span style="color:#8a8a8a">3.4.0</span></div>
<svg class="r" style="left:24.0px;top:1926.0px;" width="22" height="22" viewBox="0 0 22 22"><path d="M11,1 L11,21 M1,11 L21,11" stroke="#555" stroke-width="2.4" stroke-linecap="round"/></svg>
<div class="r" style="left:56.5px;top:1915.0px;width:682.5px;height:42.5px;background:#e6e6e6;border-radius:12px;box-shadow:inset 0 0 0 1px #d2d2d2"></div>
<svg class="r" style="left:65.0px;top:1923.0px;" width="53" height="27" viewBox="0 0 53 27"><rect x="1" y="1" width="51" height="25" rx="12.5" fill="none" stroke="#6e6e6e" stroke-width="1.8"/><g stroke="#6e6e6e" stroke-width="1.8" stroke-linecap="round"><line x1="9" y1="8.5" x2="23" y2="8.5"/><line x1="11.5" y1="13" x2="20.5" y2="13"/><line x1="14" y1="17.5" x2="18" y2="17.5"/></g><path d="M32,11 L36,15 L40,11" fill="none" stroke="#6e6e6e" stroke-width="2.2" stroke-linecap="round" stroke-linejoin="round"/></svg>
<div class="t" style="left:124.5px;top:1921.9px;font-family:'Liberation Sans', sans-serif;font-size:23.3px;line-height:30px;color:#b4b4b4;font-weight:400;">Filter</div>
<svg class="r" style="left:667.0px;top:1923.0px;" width="28" height="28" viewBox="0 0 28 28"><circle cx="14" cy="14" r="12" fill="none" stroke="#6e6e6e" stroke-width="2"/><path d="M14,6 L14,14 L9,14" fill="none" stroke="#6e6e6e" stroke-width="2"/></svg>
<svg class="r" style="left:702.0px;top:1923.0px;" width="27" height="27" viewBox="0 0 27 27"><rect x="1" y="1" width="25" height="25" rx="2" fill="none" stroke="#6e6e6e" stroke-width="2"/><path d="M5,14 L12,14 M8.5,10.5 L8.5,17.5 M15,14 L22,14" stroke="#6e6e6e" stroke-width="2"/></svg>
<svg class="r" style="left:770.0px;top:98.0px;" width="32" height="34" viewBox="0 0 32 34"><circle cx="5.5" cy="5" r="4" fill="#808080"/><circle cx="25.5" cy="7.5" r="4" fill="#808080"/><circle cx="5.5" cy="29" r="4" fill="#808080"/><path d="M5.5,6 L5.5,28 M5.5,22 C5.5,17 8,15.5 16,15 C23,14.5 25.5,13 25.5,8" fill="none" stroke="#808080" stroke-width="2.4"/></svg>
<div class="t" style="left:816.6px;top:81.9px;font-family:'Liberation Sans', sans-serif;font-size:26.8px;line-height:35px;color:#4a4a4a;font-weight:700;">StudentsAndCourses</div>
<div class="t" style="left:816.6px;top:114.0px;font-family:'Liberation Sans', sans-serif;font-size:22.3px;line-height:29px;color:#8a8a8a;font-weight:400;">main</div>
<div class="r" style="left:1291.0px;top:92.0px;width:1194.0px;height:43.5px;background:#f0f0f0;border-radius:12px"></div>
<svg class="r" style="left:1308.5px;top:102.5px;" width="23.5" height="23.5" viewBox="0 0 24 24"><rect x="0" y="0" width="24" height="24" rx="4.5" fill="#7a7a7a"/><path d="M10,5.5 L14,5.5 M12,6 L7,15 M11,7.5 L16,17 M5.5,12.5 L18.5,12.5 M7.5,16 L6.8,17.5" stroke="#fff" stroke-width="1.6" stroke-linecap="round" fill="none"/></svg>
<div class="t" style="left:1345.5px;top:99.8px;font-family:'Liberation Sans', sans-serif;font-size:23px;line-height:30px;color:#3c3c3c;font-weight:400;">StudentsAndCourses</div>
<svg class="r" style="left:1577.0px;top:104.0px;" width="9" height="20" viewBox="0 0 9 20"><path d="M1.5,1.5 L7,10 L1.5,18.5" fill="none" stroke="#8a8a8a" stroke-width="1.8" stroke-linecap="round"/></svg>
<svg class="r" style="left:1607.0px;top:102.0px;" width="16" height="25" viewBox="0 0 16 25"><rect x="1" y="1" width="14" height="23" rx="3" fill="none" stroke="#6e6e6e" stroke-width="2"/><line x1="5.5" y1="3.8" x2="10.5" y2="3.8" stroke="#6e6e6e" stroke-width="1.5"/></svg>
<div class="t" style="left:1639.7px;top:99.8px;font-family:'Liberation Sans', sans-serif;font-size:23px;line-height:30px;color:#3c3c3c;font-weight:400;">iPhone 15 Pro</div>
<div class="t" style="left:1973.0px;top:99.8px;font-family:'Liberation Sans', sans-serif;font-size:23.2px;line-height:30px;color:#454545;font-weight:400;">Running StudentsAndCourses on iPhone 15 Pro</div>
<svg class="r" style="left:2869.0px;top:101.0px;" width="26" height="26" viewBox="0 0 26 26"><path d="M13,1.5 L13,24.5 M1.5,13 L24.5,13" stroke="#6e6e6e" stroke-width="2.6" stroke-linecap="round"/></svg>
<svg class="r" style="left:2955.0px;top:98.0px;" width="40" height="32" viewBox="0 0 40 32"><rect x="1.5" y="1.5" width="37" height="29" rx="4.5" fill="none" stroke="#6e6e6e" stroke-width="2.6"/><line x1="26" y1="2" x2="26" y2="30" stroke="#6e6e6e" stroke-width="2.6"/><line x1="30" y1="8" x2="35" y2="8" stroke="#6e6e6e" stroke-width="1.8"/><line x1="30" y1="12" x2="35" y2="12" stroke="#6e6e6e" stroke-width="1.8"/><line x1="30" y1="16" x2="35" y2="16" stroke="#6e6e6e" stroke-width="1.8"/></svg>
<div class="r" style="left:752.0px;top:152.0px;width:2272.0px;height:1.5px;background:#e2e2e2;"></div>
<div class="r" style="left:752.0px;top:208.0px;width:2272.0px;height:1.5px;background:#e2e2e2;"></div>
<div class="r" style="left:752.0px;top:263.5px;width:2272.0px;height:1.5px;background:#e2e2e2;"></div>
<svg class="r" style="left:769.0px;top:167.0px;" width="28" height="28" viewBox="0 0 28 28"><g fill="none" stroke="#6e6e6e" stroke-width="2"><rect x="1" y="1" width="11" height="11"/><rect x="16" y="1" width="11" height="11"/><rect x="1" y="16" width="11" height="11"/><rect x="16" y="16" width="11" height="11"/></g><path d="M12,6.5 L16,6.5 M21.5,12 L21.5,16 M12,21.5 L16,21.5" stroke="#6e6e6e" stroke-width="2"/></svg>
<div class="r" style="left:814.0px;top:169.5px;width:1.5px;height:23.0px;background:#d5d5d5;"></div>
<svg class="r" style="left:830.0px;top:166.0px;" width="20" height="30" viewBox="0 0 20 30"><path d="M17,2 L3,15 L17,28" fill="none" stroke="#6e6e6e" stroke-width="2.6" stroke-linecap="round" stroke-linejoin="round"/></svg>
<svg class="r" style="left:870.0px;top:166.0px;" width="20" height="30" viewBox="0 0 20 30"><path d="M3,2 L17,15 L3,28" fill="none" stroke="#b5b5b5" stroke-width="2.6" stroke-linecap="round" stroke-linejoin="round"/></svg>
<div class="r" style="left:904.0px;top:153.5px;width:1.5px;height:55.0px;background:#d0d0d0;"></div>
<div class="r" style="left:905.5px;top:153.5px;width:14.0px;height:55.0px;background:linear-gradient(to right, rgba(0,0,0,0.13), rgba(0,0,0,0));"></div>
<div class="r" style="left:935.0px;top:169.0px;width:1.5px;height:24.0px;background:#d8d8d8;"></div>
<div class="r" style="left:1225.0px;top:169.0px;width:1.5px;height:24.0px;background:#d8d8d8;"></div>
<div class="r" style="left:1523.0px;top:169.0px;width:1.5px;height:24.0px;background:#d8d8d8;"></div>
<div class="r" style="left:2594.0px;top:169.0px;width:1.5px;height:24.0px;background:#d8d8d8;"></div>
<div class="r" style="left:2793.0px;top:169.0px;width:1.5px;height:24.0px;background:#d8d8d8;"></div>
<div class="r" style="left:1812.0px;top:153.5px;width:391.5px;height:54.5px;background:#d5e3f8;"></div>
<svg class="r" style="left:984.0px;top:170.5px;overflow:visible" width="23.5" height="21" viewBox="0 0 1300 1145"><path fill="#ee7845" d="M0,750 C200,950 450,1080 700,1140 C850,1160 1000,1080 1150,1010 L1300,1130 C1260,980 1220,880 1150,800 C1250,600 1150,250 800,15 C920,250 950,430 880,580 C700,450 450,260 300,120 C400,300 520,430 620,520 C450,400 250,280 140,195 C300,450 500,700 740,810 C550,880 250,880 0,750 Z"/></svg>
<div class="t" style="left:1018.0px;top:166.3px;font-family:'Liberation Sans', sans-serif;font-size:23px;line-height:30px;color:#262626;font-weight:400;">EnrolmentsView</div>
<svg class="r" style="left:1274.0px;top:170.5px;overflow:visible" width="23.5" height="21" viewBox="0 0 1300 1145"><path fill="#ee7845" d="M0,750 C200,950 450,1080 700,1140 C850,1160 1000,1080 1150,1010 L1300,1130 C1260,980 1220,880 1150,800 C1250,600 1150,250 800,15 C920,250 950,430 880,580 C700,450 450,260 300,120 C400,300 520,430 620,520 C450,400 250,280 140,195 C300,450 500,700 740,810 C550,880 250,880 0,750 Z"/></svg>
<div class="t" style="left:1308.0px;top:166.3px;font-family:'Liberation Sans', sans-serif;font-size:23px;line-height:30px;color:#262626;font-weight:400;">CoursesListView</div>
<svg class="r" style="left:1572.0px;top:170.5px;overflow:visible" width="23.5" height="21" viewBox="0 0 1300 1145"><path fill="#ee7845" d="M0,750 C200,950 450,1080 700,1140 C850,1160 1000,1080 1150,1010 L1300,1130 C1260,980 1220,880 1150,800 C1250,600 1150,250 800,15 C920,250 950,430 880,580 C700,450 450,260 300,120 C400,300 520,430 620,520 C450,400 250,280 140,195 C300,450 500,700 740,810 C550,880 250,880 0,750 Z"/></svg>
<div class="t" style="left:1606.7px;top:166.3px;font-family:'Liberation Sans', sans-serif;font-size:23px;line-height:30px;color:#262626;font-weight:400;">AddCourseView</div>
<svg class="r" style="left:1860.0px;top:170.5px;overflow:visible" width="23.5" height="21" viewBox="0 0 1300 1145"><path fill="#ee7845" d="M0,750 C200,950 450,1080 700,1140 C850,1160 1000,1080 1150,1010 L1300,1130 C1260,980 1220,880 1150,800 C1250,600 1150,250 800,15 C920,250 950,430 880,580 C700,450 450,260 300,120 C400,300 520,430 620,520 C450,400 250,280 140,195 C300,450 500,700 740,810 C550,880 250,880 0,750 Z"/></svg>
<div class="t" style="left:1894.5px;top:166.3px;font-family:'Liberation Sans', sans-serif;font-size:23px;line-height:30px;color:#2f6ee5;font-weight:400;">AddEnrolm…StudentView</div>
<svg class="r" style="left:2251.0px;top:170.5px;overflow:visible" width="23.5" height="21" viewBox="0 0 1300 1145"><path fill="#ee7845" d="M0,750 C200,950 450,1080 700,1140 C850,1160 1000,1080 1150,1010 L1300,1130 C1260,980 1220,880 1150,800 C1250,600 1150,250 800,15 C920,250 950,430 880,580 C700,450 450,260 300,120 C400,300 520,430 620,520 C450,400 250,280 140,195 C300,450 500,700 740,810 C550,880 250,880 0,750 Z"/></svg>
<div class="t" style="left:2286.5px;top:166.3px;font-family:'Liberation Sans', sans-serif;font-size:23px;line-height:30px;color:#262626;font-weight:400;">AddEnrolm…ntViewModel</div>
<svg class="r" style="left:2644.0px;top:170.5px;overflow:visible" width="23.5" height="21" viewBox="0 0 1300 1145"><path fill="#ee7845" d="M0,750 C200,950 450,1080 700,1140 C850,1160 1000,1080 1150,1010 L1300,1130 C1260,980 1220,880 1150,800 C1250,600 1150,250 800,15 C920,250 950,430 880,580 C700,450 450,260 300,120 C400,300 520,430 620,520 C450,400 250,280 140,195 C300,450 500,700 740,810 C550,880 250,880 0,750 Z"/></svg>
<div class="t" style="left:2679.0px;top:166.3px;font-family:'Liberation Sans', sans-serif;font-size:23px;line-height:30px;color:#262626;font-weight:400;">Course</div>
<div class="r" style="left:2829.0px;top:153.5px;width:14.0px;height:55.0px;background:linear-gradient(to left, rgba(0,0,0,0.13), rgba(0,0,0,0));"></div>
<div class="r" style="left:2843.0px;top:153.5px;width:1.5px;height:55.0px;background:#d0d0d0;"></div>
<div class="r" style="left:2844.5px;top:153.5px;width:179.5px;height:55.0px;background:#ffffff;"></div>
<svg class="r" style="left:2858.0px;top:166.0px;" width="28" height="30" viewBox="0 0 28 30"><path d="M4,9 L25,9 M19,3 L25,9 L19,15 M24,21 L3,21 M9,15 L3,21 L9,27" fill="none" stroke="#6e6e6e" stroke-width="2" stroke-linecap="round" stroke-linejoin="round"/></svg>
<svg class="r" style="left:2905.0px;top:167.0px;" width="38" height="28" viewBox="0 0 38 28"><g stroke="#6e6e6e" stroke-width="2"><line x1="0" y1="2" x2="12" y2="2"/><line x1="0" y1="8" x2="12" y2="8"/><line x1="0" y1="14" x2="12" y2="14"/><line x1="0" y1="20" x2="12" y2="20"/><line x1="0" y1="26" x2="12" y2="26"/></g><rect x="19" y="1.5" width="16" height="25" fill="none" stroke="#6e6e6e" stroke-width="2.2"/><rect x="24" y="6" width="6" height="16" fill="none" stroke="#6e6e6e" stroke-width="2"/></svg>
<div class="r" style="left:2961.0px;top:169.0px;width:1.5px;height:24.0px;background:#d8d8d8;"></div>
<svg class="r" style="left:2979.0px;top:166.0px;" width="28" height="30" viewBox="0 0 28 30"><rect x="1.5" y="2" width="25" height="26" rx="4" fill="none" stroke="#6e6e6e" stroke-width="2"/><line x1="10" y1="2" x2="10" y2="28" stroke="#6e6e6e" stroke-width="2"/><path d="M18,10 L18,20 M13,15 L23,15" stroke="#6e6e6e" stroke-width="2"/></svg>
<svg class="r" style="left:767.5px;top:222.5px;" width="27" height="27" viewBox="0 0 29 29"><rect x="0.5" y="0.5" width="28" height="28" rx="7" fill="#1a82fb"/><rect x="3" y="3" width="23" height="23" rx="5" fill="none" stroke="#fff" stroke-opacity="0.55" stroke-width="1.6"/><path d="M12.2,7.2 L16.8,7.2 M14.6,7.6 L9.2,17.2 M14.2,8.6 L21.2,21.4 M6.2,18.3 L23.2,18.3 M8.2,20.6 L7.2,22.4" stroke="#fff" stroke-width="2.1" stroke-linecap="round" fill="none"/></svg>
<div class="t" style="left:806.5px;top:221.8px;font-family:'Liberation Sans', sans-serif;font-size:23px;line-height:30px;color:#262626;font-weight:400;">StudentsAndCourses</div>
<svg class="r" style="left:1038.0px;top:227.5px;" width="10" height="20" viewBox="0 0 10 20"><path d="M2.2,1.5 L7,10 L2.2,18.5" fill="none" stroke="#858585" stroke-width="2.4" stroke-linecap="round" stroke-linejoin="round"/></svg>
<svg class="r" style="left:1063.0px;top:225.5px;" width="25" height="20.5" viewBox="0 0 29 24"><path fill="#888c91" d="M0,4 Q0,0 4,0 L10,0 Q12,0 13.5,1.5 L15,3 L25,3 Q29,3 29,7 L29,8 L0,8 Z"/><path fill="#888c91" d="M0,10 L29,10 L29,20 Q29,24 25,24 L4,24 Q0,24 0,20 Z"/></svg>
<div class="t" style="left:1100.0px;top:221.8px;font-family:'Liberation Sans', sans-serif;font-size:23px;line-height:30px;color:#262626;font-weight:400;">StudentsAndCourses</div>
<svg class="r" style="left:1331.0px;top:227.5px;" width="10" height="20" viewBox="0 0 10 20"><path d="M2.2,1.5 L7,10 L2.2,18.5" fill="none" stroke="#858585" stroke-width="2.4" stroke-linecap="round" stroke-linejoin="round"/></svg>
<svg class="r" style="left:1358.0px;top:225.5px;" width="25" height="20.5" viewBox="0 0 29 24"><path fill="#888c91" d="M0,4 Q0,0 4,0 L10,0 Q12,0 13.5,1.5 L15,3 L25,3 Q29,3 29,7 L29,8 L0,8 Z"/><path fill="#888c91" d="M0,10 L29,10 L29,20 Q29,24 25,24 L4,24 Q0,24 0,20 Z"/></svg>
<div class="t" style="left:1395.0px;top:221.8px;font-family:'Liberation Sans', sans-serif;font-size:23px;line-height:30px;color:#262626;font-weight:400;">Views</div>
<svg class="r" style="left:1465.0px;top:227.5px;" width="10" height="20" viewBox="0 0 10 20"><path d="M2.2,1.5 L7,10 L2.2,18.5" fill="none" stroke="#858585" stroke-width="2.4" stroke-linecap="round" stroke-linejoin="round"/></svg>
<svg class="r" style="left:1492.0px;top:226.0px;overflow:visible" width="23.5" height="21" viewBox="0 0 1300 1145"><path fill="#ee7845" d="M0,750 C200,950 450,1080 700,1140 C850,1160 1000,1080 1150,1010 L1300,1130 C1260,980 1220,880 1150,800 C1250,600 1150,250 800,15 C920,250 950,430 880,580 C700,450 450,260 300,120 C400,300 520,430 620,520 C450,400 250,280 140,195 C300,450 500,700 740,810 C550,880 250,880 0,750 Z"/></svg>
<div class="t" style="left:1528.7px;top:221.8px;font-family:'Liberation Sans', sans-serif;font-size:23px;line-height:30px;color:#262626;font-weight:400;">AddEnrolmentFromStudentView</div>
<svg class="r" style="left:1872.0px;top:227.5px;" width="10" height="20" viewBox="0 0 10 20"><path d="M2.2,1.5 L7,10 L2.2,18.5" fill="none" stroke="#858585" stroke-width="2.4" stroke-linecap="round" stroke-linejoin="round"/></svg>
<svg class="r" style="left:1896.0px;top:222.0px;" width="28" height="28" viewBox="0 0 28 28"><rect x="0" y="0" width="28" height="28" rx="5" fill="#bb55d9"/></svg>
<div class="t" style="left:1896px;top:223.5px;width:28px;height:28px;text-align:center;font-family:'Liberation Sans', sans-serif;font-size:23px;line-height:28px;font-weight:400;-webkit-text-stroke:1px #fff;color:#fff">S</div>
<div class="t" style="left:1935.0px;top:221.8px;font-family:'Liberation Sans', sans-serif;font-size:23px;line-height:30px;color:#262626;font-weight:400;">AddEnrolmentFromStudentView</div>
<div class="r" style="left:2328.5px;top:264.5px;width:1.0px;height:1644.0px;background:#e6e6e6;"></div>
<div class="r" style="left:2329.5px;top:264.5px;width:27.5px;height:1644.0px;background:#f8f8f8;"></div>
<div class="r" style="left:2336.3px;top:272.0px;width:15.5px;height:1100.0px;background:#808080;border-radius:8px"></div>
<div class="r" style="left:2357.0px;top:264.5px;width:667.0px;height:1644.0px;background:#e1e2e6;background-image:repeating-linear-gradient(128deg, rgba(0,0,0,0.018) 0px, rgba(0,0,0,0.018) 150px, rgba(255,255,255,0.06) 150px, rgba(255,255,255,0.06) 350px)"></div>
<div class="r" style="left:2432.0px;top:405.5px;width:520.0px;height:80.5px;background:#ffffff;border-radius:14px;box-shadow:0 1px 4px rgba(0,0,0,0.18)"></div>
<div class="t" style="left:2448.6px;top:430.0px;font-family:'Liberation Sans', sans-serif;font-size:26.6px;line-height:35px;color:#4a4a4a;font-weight:700;">Preview paused</div>
<svg class="r" style="left:2902.0px;top:432.0px;" width="26" height="30" viewBox="0 0 26 30"><path d="M21.5,15 A9.5,9.5 0 1 1 12,5.5 L17,5.5" fill="none" stroke="#6e6e6e" stroke-width="2" stroke-linecap="round"/><path d="M14,1.5 L18,5.5 L14,9.5" fill="none" stroke="#6e6e6e" stroke-width="2" stroke-linecap="round" stroke-linejoin="round"/></svg>
<div class="r" style="left:2384.3px;top:1831.7px;width:364.4px;height:52.3px;background:#ffffff;border-radius:13px;box-shadow:0 1px 4px rgba(0,0,0,0.18)"></div>
<svg class="r" style="left:2402.0px;top:1847.0px;" width="17" height="24" viewBox="0 0 17 24"><rect x="1" y="1" width="14" height="22" rx="3" fill="none" stroke="#555" stroke-width="2"/><line x1="5" y1="19.5" x2="11" y2="19.5" stroke="#555" stroke-width="1.5"/><line x1="6" y1="3.8" x2="10" y2="3.8" stroke="#555" stroke-width="1.5"/></svg>
<div class="t" style="left:2430.8px;top:1843.0px;font-family:'Liberation Sans', sans-serif;font-size:23px;line-height:30px;color:#3a3a3a;font-weight:400;">Automatic – iPhone 15 Pro</div>
<svg class="r" style="left:2715.0px;top:1852.0px;" width="18" height="12" viewBox="0 0 18 12"><path d="M2.5,2.5 L9,8.5 L15.5,2.5" fill="none" stroke="#3a3a3a" stroke-width="2.6" stroke-linecap="round" stroke-linejoin="round"/></svg>
<div class="r" style="left:752.0px;top:1908.0px;width:2272.0px;height:1.5px;background:#e2e2e2;"></div>
<svg class="r" style="left:774.0px;top:1927.0px;" width="31" height="19" viewBox="0 0 31 19"><path d="M0,3 Q0,0 3,0 L23,0 L30,9.5 L23,19 L3,19 Q0,19 0,16 Z" fill="#3478f6"/></svg>
<div class="r" style="left:820.0px;top:1924.0px;width:1.5px;height:25.0px;background:#d5d5d5;"></div>
<svg class="r" style="left:842.0px;top:1924.0px;" width="20" height="26" viewBox="0 0 20 26"><rect x="1" y="1" width="5" height="24" rx="1.5" fill="none" stroke="#6e6e6e" stroke-width="2"/><rect x="14" y="1" width="5" height="24" rx="1.5" fill="none" stroke="#6e6e6e" stroke-width="2"/></svg>
<svg class="r" style="left:898.0px;top:1923.0px;" width="28" height="28" viewBox="0 0 28 28"><path d="M2,14 L13,4 L25,14 M20,9 L25,14 L20,14" fill="none" stroke="#b8b8b8" stroke-width="2" stroke-linejoin="round"/><rect x="3" y="19" width="20" height="6" fill="none" stroke="#b8b8b8" stroke-width="2"/></svg>
<svg class="r" style="left:961.0px;top:1923.0px;" width="22" height="28" viewBox="0 0 22 28"><path d="M11,1 L11,16 M5,10 L11,16 L17,10" fill="none" stroke="#b8b8b8" stroke-width="2"/><rect x="2" y="20" width="18" height="6" fill="none" stroke="#b8b8b8" stroke-width="2"/></svg>
<svg class="r" style="left:1021.0px;top:1923.0px;" width="22" height="28" viewBox="0 0 22 28"><path d="M11,17 L11,2 M5,8 L11,2 L17,8" fill="none" stroke="#b8b8b8" stroke-width="2"/><rect x="2" y="20" width="18" height="6" fill="none" stroke="#b8b8b8" stroke-width="2"/></svg>
<div class="r" style="left:1063.0px;top:1924.0px;width:1.5px;height:25.0px;background:#d5d5d5;"></div>
<svg class="r" style="left:1081.0px;top:1922.0px;" width="26" height="30" viewBox="0 0 26 30"><path d="M3,8 L17,2 L23,6 L23,24 L9,29 L3,25 Z M9,11 L23,6 M9,11 L9,29 M6,9.5 L6,27 M3,8 L9,11" fill="none" stroke="#6e6e6e" stroke-width="1.8" stroke-linejoin="round"/></svg>
<svg class="r" style="left:1140.0px;top:1922.0px;" width="28" height="30" viewBox="0 0 28 30"><circle cx="6" cy="5.5" r="4.2" fill="none" stroke="#6e6e6e" stroke-width="2"/><circle cx="6" cy="24.5" r="4.2" fill="none" stroke="#6e6e6e" stroke-width="2"/><circle cx="22.5" cy="15" r="4.2" fill="none" stroke="#6e6e6e" stroke-width="2"/><path d="M9.5,8 L18.5,13 M9.5,22 L18.5,17" stroke="#6e6e6e" stroke-width="2"/></svg>
<svg class="r" style="left:1202.0px;top:1922.0px;" width="24" height="30" viewBox="0 0 24 30"><rect x="1" y="1" width="22" height="12" rx="6" fill="none" stroke="#6e6e6e" stroke-width="2"/><circle cx="7" cy="7" r="3.3" fill="#6e6e6e"/><rect x="1" y="17" width="22" height="12" rx="6" fill="none" stroke="#6e6e6e" stroke-width="2"/><circle cx="17" cy="23" r="3.3" fill="#6e6e6e"/></svg>
<svg class="r" style="left:1261.0px;top:1922.0px;" width="27" height="30" viewBox="0 0 27 30"><path d="M25,2 L2,12 L13,14.5 L15,28 Z" fill="none" stroke="#6e6e6e" stroke-width="2" stroke-linejoin="round"/></svg>
<div class="r" style="left:1305.0px;top:1924.0px;width:1.5px;height:25.0px;background:#d5d5d5;"></div>
<svg class="r" style="left:1323.8px;top:1925.0px;" width="23.5" height="23.5" viewBox="0 0 24 24"><rect x="0" y="0" width="24" height="24" rx="4.5" fill="#7a7a7a"/><path d="M10,5.5 L14,5.5 M12,6 L7,15 M11,7.5 L16,17 M5.5,12.5 L18.5,12.5 M7.5,16 L6.8,17.5" stroke="#fff" stroke-width="1.6" stroke-linecap="round" fill="none"/></svg>
<div class="t" style="left:1361.0px;top:1922.0px;font-family:'Liberation Sans', sans-serif;font-size:23px;line-height:30px;color:#262626;font-weight:400;">StudentsAndCourses</div>
<div class="t" style="left:2789.8px;top:1921.6px;font-family:'Liberation Sans', sans-serif;font-size:24.2px;line-height:31px;color:#7a7a7a;font-weight:400;">27 characters</div>
<div class="r" style="left:2954.0px;top:1927.0px;width:1.5px;height:21.0px;background:#d5d5d5;"></div>
<svg class="r" style="left:2972.0px;top:1924.0px;" width="28" height="27" viewBox="0 0 28 27"><rect x="1" y="1" width="26" height="25" rx="4" fill="none" stroke="#6e6e6e" stroke-width="2"/><rect x="4" y="17" width="20" height="6" rx="1" fill="#6e6e6e"/></svg>
<div class="r" style="left:1018.5px;top:628.5px;width:499.5px;height:38.5px;background:#b4d5fe;"></div>
<div class="r" style="left:850.0px;top:270.0px;width:14.0px;height:236.0px;background:#e6e6e6;border-radius:7px"></div>
<div class="r" style="left:850px;top:626.5px;width:14px;height:1281.5px;box-sizing:border-box;background:#e8e8e8;border-top:1.5px solid rgba(255,255,255,0.75);border-radius:7px 7px 0 0;background-clip:padding-box"></div>
<div class="r" style="left:850px;top:1186.5px;width:14px;height:721.5px;box-sizing:border-box;background:#d6d6d6;border-top:1.5px solid rgba(255,255,255,0.75);border-radius:7px 7px 0 0;background-clip:padding-box"></div>
<div class="r" style="left:850px;top:1226.5px;width:14px;height:681.5px;box-sizing:border-box;background:#c5c5c5;border-top:1.5px solid rgba(255,255,255,0.75);border-radius:7px 7px 0 0;background-clip:padding-box"></div>
<div class="r" style="left:850px;top:1266.5px;width:14px;height:641.5px;box-sizing:border-box;background:#b3b3b3;border-top:1.5px solid rgba(255,255,255,0.75);border-radius:7px 7px 0 0;background-clip:padding-box"></div>
<div class="r" style="left:850px;top:1306.5px;width:14px;height:563.0px;box-sizing:border-box;background:#a4a4a4;border-top:1.5px solid rgba(255,255,255,0.75);border-bottom:1.5px solid rgba(255,255,255,0.75);border-radius:7px 7px 7px 7px;background-clip:padding-box"></div>
<div class="r" style="left:850px;top:1346.5px;width:14px;height:443.0px;box-sizing:border-box;background:#959595;border-top:1.5px solid rgba(255,255,255,0.75);border-bottom:1.5px solid rgba(255,255,255,0.75);border-radius:7px 7px 7px 7px;background-clip:padding-box"></div>
<div class="r" style="left:850px;top:1426.5px;width:14px;height:323.0px;box-sizing:border-box;background:#868686;border-top:1.5px solid rgba(255,255,255,0.75);border-bottom:1.5px solid rgba(255,255,255,0.75);border-radius:7px 7px 7px 7px;background-clip:padding-box"></div>
<div class="r" style="left:850px;top:1466.5px;width:14px;height:203.0px;box-sizing:border-box;background:#797979;border-top:1.5px solid rgba(255,255,255,0.75);border-bottom:1.5px solid rgba(255,255,255,0.75);border-radius:7px 7px 7px 7px;background-clip:padding-box"></div>
<div class="t" style="left:740px;width:101px;text-align:right;transform:scaleX(0.92);transform-origin:100% 50%;top:268.8px;font-family:'Liberation Sans', sans-serif;font-size:29.5px;line-height:40px;color:#a6a6a6">1</div>
<div class="t" style="left:740px;width:101px;text-align:right;transform:scaleX(0.92);transform-origin:100% 50%;top:308.8px;font-family:'Liberation Sans', sans-serif;font-size:29.5px;line-height:40px;color:#a6a6a6">2</div>
<div class="t" style="left:740px;width:101px;text-align:right;transform:scaleX(0.92);transform-origin:100% 50%;top:348.8px;font-family:'Liberation Sans', sans-serif;font-size:29.5px;line-height:40px;color:#a6a6a6">3</div>
<div class="t" style="left:740px;width:101px;text-align:right;transform:scaleX(0.92);transform-origin:100% 50%;top:388.8px;font-family:'Liberation Sans', sans-serif;font-size:29.5px;line-height:40px;color:#a6a6a6">4</div>
<div class="t" style="left:740px;width:101px;text-align:right;transform:scaleX(0.92);transform-origin:100% 50%;top:428.8px;font-family:'Liberation Sans', sans-serif;font-size:29.5px;line-height:40px;color:#a6a6a6">5</div>
<div class="t" style="left:740px;width:101px;text-align:right;transform:scaleX(0.92);transform-origin:100% 50%;top:468.8px;font-family:'Liberation Sans', sans-serif;font-size:29.5px;line-height:40px;color:#a6a6a6">6</div>
<div class="t" style="left:740px;width:101px;text-align:right;transform:scaleX(0.92);transform-origin:100% 50%;top:508.8px;font-family:'Liberation Sans', sans-serif;font-size:29.5px;line-height:40px;color:#a6a6a6">7</div>
<div class="t" style="left:740px;width:101px;text-align:right;transform:scaleX(0.92);transform-origin:100% 50%;top:548.8px;font-family:'Liberation Sans', sans-serif;font-size:29.5px;line-height:40px;color:#a6a6a6">8</div>
<div class="t" style="left:740px;width:101px;text-align:right;transform:scaleX(0.92);transform-origin:100% 50%;top:588.8px;font-family:'Liberation Sans', sans-serif;font-size:29.5px;line-height:40px;color:#a6a6a6">9</div>
<div class="t" style="left:740px;width:101px;text-align:right;transform:scaleX(0.92);transform-origin:100% 50%;top:628.8px;font-family:'Liberation Sans', sans-serif;font-size:29.5px;line-height:40px;color:#1f1f1f">10</div>
<div class="t" style="left:740px;width:101px;text-align:right;transform:scaleX(0.92);transform-origin:100% 50%;top:668.8px;font-family:'Liberation Sans', sans-serif;font-size:29.5px;line-height:40px;color:#a6a6a6">11</div>
<div class="t" style="left:740px;width:101px;text-align:right;transform:scaleX(0.92);transform-origin:100% 50%;top:708.8px;font-family:'Liberation Sans', sans-serif;font-size:29.5px;line-height:40px;color:#a6a6a6">12</div>
<div class="t" style="left:740px;width:101px;text-align:right;transform:scaleX(0.92);transform-origin:100% 50%;top:748.8px;font-family:'Liberation Sans', sans-serif;font-size:29.5px;line-height:40px;color:#a6a6a6">13</div>
<div class="t" style="left:740px;width:101px;text-align:right;transform:scaleX(0.92);transform-origin:100% 50%;top:788.8px;font-family:'Liberation Sans', sans-serif;font-size:29.5px;line-height:40px;color:#a6a6a6">14</div>
<div class="t" style="left:740px;width:101px;text-align:right;transform:scaleX(0.92);transform-origin:100% 50%;top:828.8px;font-family:'Liberation Sans', sans-serif;font-size:29.5px;line-height:40px;color:#a6a6a6">15</div>
<div class="t" style="left:740px;width:101px;text-align:right;transform:scaleX(0.92);transform-origin:100% 50%;top:868.8px;font-family:'Liberation Sans', sans-serif;font-size:29.5px;line-height:40px;color:#a6a6a6">16</div>
<div class="t" style="left:740px;width:101px;text-align:right;transform:scaleX(0.92);transform-origin:100% 50%;top:908.8px;font-family:'Liberation Sans', sans-serif;font-size:29.5px;line-height:40px;color:#a6a6a6">17</div>
<div class="t" style="left:740px;width:101px;text-align:right;transform:scaleX(0.92);transform-origin:100% 50%;top:948.8px;font-family:'Liberation Sans', sans-serif;font-size:29.5px;line-height:40px;color:#a6a6a6">18</div>
<div class="t" style="left:740px;width:101px;text-align:right;transform:scaleX(0.92);transform-origin:100% 50%;top:988.8px;font-family:'Liberation Sans', sans-serif;font-size:29.5px;line-height:40px;color:#a6a6a6">19</div>
<div class="t" style="left:740px;width:101px;text-align:right;transform:scaleX(0.92);transform-origin:100% 50%;top:1028.8px;font-family:'Liberation Sans', sans-serif;font-size:29.5px;line-height:40px;color:#a6a6a6">20</div>
<div class="t" style="left:740px;width:101px;text-align:right;transform:scaleX(0.92);transform-origin:100% 50%;top:1068.8px;font-family:'Liberation Sans', sans-serif;font-size:29.5px;line-height:40px;color:#a6a6a6">21</div>
<div class="t" style="left:740px;width:101px;text-align:right;transform:scaleX(0.92);transform-origin:100% 50%;top:1108.8px;font-family:'Liberation Sans', sans-serif;font-size:29.5px;line-height:40px;color:#a6a6a6">22</div>
<div class="t" style="left:740px;width:101px;text-align:right;transform:scaleX(0.92);transform-origin:100% 50%;top:1148.8px;font-family:'Liberation Sans', sans-serif;font-size:29.5px;line-height:40px;color:#a6a6a6">23</div>
<div class="t" style="left:740px;width:101px;text-align:right;transform:scaleX(0.92);transform-origin:100% 50%;top:1188.8px;font-family:'Liberation Sans', sans-serif;font-size:29.5px;line-height:40px;color:#a6a6a6">24</div>
<div class="t" style="left:740px;width:101px;text-align:right;transform:scaleX(0.92);transform-origin:100% 50%;top:1228.8px;font-family:'Liberation Sans', sans-serif;font-size:29.5px;line-height:40px;color:#a6a6a6">25</div>
<div class="t" style="left:740px;width:101px;text-align:right;transform:scaleX(0.92);transform-origin:100% 50%;top:1268.8px;font-family:'Liberation Sans', sans-serif;font-size:29.5px;line-height:40px;color:#a6a6a6">26</div>
<div class="t" style="left:740px;width:101px;text-align:right;transform:scaleX(0.92);transform-origin:100% 50%;top:1308.8px;font-family:'Liberation Sans', sans-serif;font-size:29.5px;line-height:40px;color:#a6a6a6">27</div>
<div class="t" style="left:740px;width:101px;text-align:right;transform:scaleX(0.92);transform-origin:100% 50%;top:1348.8px;font-family:'Liberation Sans', sans-serif;font-size:29.5px;line-height:40px;color:#a6a6a6">28</div>
<div class="t" style="left:740px;width:101px;text-align:right;transform:scaleX(0.92);transform-origin:100% 50%;top:1428.8px;font-family:'Liberation Sans', sans-serif;font-size:29.5px;line-height:40px;color:#a6a6a6">29</div>
<div class="t" style="left:740px;width:101px;text-align:right;transform:scaleX(0.92);transform-origin:100% 50%;top:1468.8px;font-family:'Liberation Sans', sans-serif;font-size:29.5px;line-height:40px;color:#a6a6a6">30</div>
<div class="t" style="left:740px;width:101px;text-align:right;transform:scaleX(0.92);transform-origin:100% 50%;top:1508.8px;font-family:'Liberation Sans', sans-serif;font-size:29.5px;line-height:40px;color:#a6a6a6">31</div>
<div class="t" style="left:740px;width:101px;text-align:right;transform:scaleX(0.92);transform-origin:100% 50%;top:1548.8px;font-family:'Liberation Sans', sans-serif;font-size:29.5px;line-height:40px;color:#a6a6a6">32</div>
<div class="t" style="left:740px;width:101px;text-align:right;transform:scaleX(0.92);transform-origin:100% 50%;top:1588.8px;font-family:'Liberation Sans', sans-serif;font-size:29.5px;line-height:40px;color:#a6a6a6">33</div>
<div class="t" style="left:740px;width:101px;text-align:right;transform:scaleX(0.92);transform-origin:100% 50%;top:1628.8px;font-family:'Liberation Sans', sans-serif;font-size:29.5px;line-height:40px;color:#a6a6a6">34</div>
<div class="t" style="left:740px;width:101px;text-align:right;transform:scaleX(0.92);transform-origin:100% 50%;top:1668.8px;font-family:'Liberation Sans', sans-serif;font-size:29.5px;line-height:40px;color:#a6a6a6">35</div>
<div class="t" style="left:740px;width:101px;text-align:right;transform:scaleX(0.92);transform-origin:100% 50%;top:1708.8px;font-family:'Liberation Sans', sans-serif;font-size:29.5px;line-height:40px;color:#a6a6a6">36</div>
<div class="t" style="left:740px;width:101px;text-align:right;transform:scaleX(0.92);transform-origin:100% 50%;top:1748.8px;font-family:'Liberation Sans', sans-serif;font-size:29.5px;line-height:40px;color:#a6a6a6">37</div>
<div class="t" style="left:740px;width:101px;text-align:right;transform:scaleX(0.92);transform-origin:100% 50%;top:1788.8px;font-family:'Liberation Sans', sans-serif;font-size:29.5px;line-height:40px;color:#a6a6a6">38</div>
<div class="t" style="left:740px;width:101px;text-align:right;transform:scaleX(0.92);transform-origin:100% 50%;top:1828.8px;font-family:'Liberation Sans', sans-serif;font-size:29.5px;line-height:40px;color:#a6a6a6">39</div>
<div class="t" style="left:740px;width:101px;text-align:right;transform:scaleX(0.92);transform-origin:100% 50%;top:1868.8px;font-family:'Liberation Sans', sans-serif;font-size:29.5px;line-height:40px;color:#a6a6a6">40</div>
<div class="t" style="left:889.0px;top:269.6px;font-family:'Liberation Mono', monospace;font-size:30.83px;line-height:40px;color:#1e1e1e;font-weight:400;"><span style="color:#64727f;">//</span></div>
<div class="t" style="left:889.0px;top:309.6px;font-family:'Liberation Mono', monospace;font-size:30.83px;line-height:40px;color:#1e1e1e;font-weight:400;"><span style="color:#64727f;">//  AddEnrolmentFromStudentView.swift</span></div>
<div class="t" style="left:889.0px;top:349.6px;font-family:'Liberation Mono', monospace;font-size:30.83px;line-height:40px;color:#1e1e1e;font-weight:400;"><span style="color:#64727f;">//  StudentsAndCourses</span></div>
<div class="t" style="left:889.0px;top:389.6px;font-family:'Liberation Mono', monospace;font-size:30.83px;line-height:40px;color:#1e1e1e;font-weight:400;"><span style="color:#64727f;">//</span></div>
<div class="t" style="left:889.0px;top:429.6px;font-family:'Liberation Mono', monospace;font-size:30.83px;line-height:40px;color:#1e1e1e;font-weight:400;"><span style="color:#64727f;">//  Created by Russell Gordon on 2024-06-10.</span></div>
<div class="t" style="left:889.0px;top:469.6px;font-family:'Liberation Mono', monospace;font-size:30.83px;line-height:40px;color:#1e1e1e;font-weight:400;"><span style="color:#64727f;">//</span></div>
<div class="t" style="left:889.0px;top:549.6px;font-family:'Liberation Mono', monospace;font-size:30.83px;line-height:40px;color:#1e1e1e;font-weight:400;"><span style="color:#9e3e9e;-webkit-text-stroke:1px #9e3e9e;">import</span><span style="color:#1e1e1e;"> SwiftUI</span></div>
<div class="t" style="left:889.0px;top:629.6px;font-family:'Liberation Mono', monospace;font-size:30.83px;line-height:40px;color:#1e1e1e;font-weight:400;"><span style="color:#9e3e9e;-webkit-text-stroke:1px #9e3e9e;">struct</span><span style="color:#1e1e1e;"> </span><span style="color:#245e88;">AddEnrolmentFromStudentView</span><span style="color:#1e1e1e;">: </span><span style="color:#3d1fa8;">View</span><span style="color:#1e1e1e;"> {</span></div>
<div class="t" style="left:889.0px;top:709.6px;font-family:'Liberation Mono', monospace;font-size:30.83px;line-height:40px;color:#1e1e1e;font-weight:400;"><span style="color:#64727f;">    // </span><span style="color:#4c5763;font-weight:700;">MARK: Stored properties</span></div>
<div class="t" style="left:889.0px;top:789.6px;font-family:'Liberation Mono', monospace;font-size:30.83px;line-height:40px;color:#1e1e1e;font-weight:400;"><span style="color:#64727f;">    // Is this view showing in a sheet?</span></div>
<div class="t" style="left:889.0px;top:829.6px;font-family:'Liberation Mono', monospace;font-size:30.83px;line-height:40px;color:#1e1e1e;font-weight:400;"><span style="color:#1e1e1e;">    </span><span style="color:#3d1fa8;">@Binding</span><span style="color:#1e1e1e;"> </span><span style="color:#9e3e9e;-webkit-text-stroke:1px #9e3e9e;">var</span><span style="color:#1e1e1e;"> </span><span style="color:#2e75a8;">isShowing</span><span style="color:#1e1e1e;">: </span><span style="color:#3d1fa8;">Bool</span></div>
<div class="t" style="left:889.0px;top:909.6px;font-family:'Liberation Mono', monospace;font-size:30.83px;line-height:40px;color:#1e1e1e;font-weight:400;"><span style="color:#64727f;">    // Receive a reference to our view model</span></div>
<div class="t" style="left:889.0px;top:949.6px;font-family:'Liberation Mono', monospace;font-size:30.83px;line-height:40px;color:#1e1e1e;font-weight:400;"><span style="color:#1e1e1e;">    </span><span style="color:#9e3e9e;-webkit-text-stroke:1px #9e3e9e;">let</span><span style="color:#1e1e1e;"> </span><span style="color:#2e75a8;">viewModel</span><span style="color:#1e1e1e;">: </span><span style="color:#2a5258;">AddEnrolmentFromStudentViewModel</span></div>
<div class="t" style="left:889.0px;top:1029.6px;font-family:'Liberation Mono', monospace;font-size:30.83px;line-height:40px;color:#1e1e1e;font-weight:400;"><span style="color:#64727f;">    // Stores the selected course</span></div>
<div class="t" style="left:889.0px;top:1069.6px;font-family:'Liberation Mono', monospace;font-size:30.83px;line-height:40px;color:#1e1e1e;font-weight:400;"><span style="color:#1e1e1e;">    </span><span style="color:#3d1fa8;">@State</span><span style="color:#1e1e1e;"> </span><span style="color:#9e3e9e;-webkit-text-stroke:1px #9e3e9e;">private</span><span style="color:#1e1e1e;"> </span><span style="color:#9e3e9e;-webkit-text-stroke:1px #9e3e9e;">var</span><span style="color:#1e1e1e;"> </span><span style="color:#2e75a8;">selectedCourseId</span><span style="color:#1e1e1e;">: </span><span style="color:#3d1fa8;">Int</span></div>
<div class="t" style="left:889.0px;top:1149.6px;font-family:'Liberation Mono', monospace;font-size:30.83px;line-height:40px;color:#1e1e1e;font-weight:400;"><span style="color:#64727f;">    // </span><span style="color:#4c5763;font-weight:700;">MARK: Computed properties</span></div>
<div class="t" style="left:889.0px;top:1189.6px;font-family:'Liberation Mono', monospace;font-size:30.83px;line-height:40px;color:#1e1e1e;font-weight:400;"><span style="color:#1e1e1e;">    </span><span style="color:#9e3e9e;-webkit-text-stroke:1px #9e3e9e;">var</span><span style="color:#1e1e1e;"> </span><span style="color:#2e75a8;">body</span><span style="color:#1e1e1e;">: </span><span style="color:#9e3e9e;-webkit-text-stroke:1px #9e3e9e;">some</span><span style="color:#1e1e1e;"> </span><span style="color:#3d1fa8;">View</span><span style="color:#1e1e1e;"> {</span></div>
<div class="t" style="left:889.0px;top:1229.6px;font-family:'Liberation Mono', monospace;font-size:30.83px;line-height:40px;color:#1e1e1e;font-weight:400;"><span style="color:#1e1e1e;">        </span><span style="color:#3d1fa8;">NavigationStack</span><span style="color:#1e1e1e;"> {</span></div>
<div class="t" style="left:889.0px;top:1269.6px;font-family:'Liberation Mono', monospace;font-size:30.83px;line-height:40px;color:#1e1e1e;font-weight:400;"><span style="color:#1e1e1e;">            </span><span style="color:#3d1fa8;">Form</span><span style="color:#1e1e1e;"> {</span></div>
<div class="t" style="left:889.0px;top:1309.6px;font-family:'Liberation Mono', monospace;font-size:30.83px;line-height:40px;color:#1e1e1e;font-weight:400;"><span style="color:#1e1e1e;">                </span><span style="color:#3d1fa8;">Section</span><span style="color:#1e1e1e;"> {</span></div>
<div class="t" style="left:889.0px;top:1349.6px;font-family:'Liberation Mono', monospace;font-size:30.83px;line-height:40px;color:#1e1e1e;font-weight:400;"><span style="color:#1e1e1e;">                    </span><span style="color:#3d1fa8;">Picker</span><span style="color:#1e1e1e;">(</span><span style="color:#c23a20;">"Enrol in course"</span><span style="color:#1e1e1e;">, selection:</span></div>
<div class="t" style="left:889.0px;top:1389.6px;font-family:'Liberation Mono', monospace;font-size:30.83px;line-height:40px;color:#1e1e1e;font-weight:400;"><span style="color:#1e1e1e;">                        </span><span style="color:#477b83;">$selectedCourseId</span><span style="color:#1e1e1e;">) {</span></div>
<div class="t" style="left:889.0px;top:1429.6px;font-family:'Liberation Mono', monospace;font-size:30.83px;line-height:40px;color:#1e1e1e;font-weight:400;"><span style="color:#1e1e1e;">                        </span><span style="color:#3d1fa8;">ForEach</span><span style="color:#1e1e1e;">(</span><span style="color:#477b83;">viewModel</span><span style="color:#1e1e1e;">.courses) { course </span><span style="color:#9e3e9e;-webkit-text-stroke:1px #9e3e9e;">in</span></div>
<div class="t" style="left:889.0px;top:1469.6px;font-family:'Liberation Mono', monospace;font-size:30.83px;line-height:40px;color:#1e1e1e;font-weight:400;"><span style="color:#64727f;">                            // NOTE: The id property will always</span></div>
<div class="t" style="left:889.0px;top:1509.6px;font-family:'Liberation Mono', monospace;font-size:30.83px;line-height:40px;color:#1e1e1e;font-weight:400;"><span style="color:#64727f;">                            //       have a value, since it must</span></div>
<div class="t" style="left:889.0px;top:1549.6px;font-family:'Liberation Mono', monospace;font-size:30.83px;line-height:40px;color:#1e1e1e;font-weight:400;"><span style="color:#64727f;">                            //       be defined since we retrieve the list</span></div>
<div class="t" style="left:889.0px;top:1589.6px;font-family:'Liberation Mono', monospace;font-size:30.83px;line-height:40px;color:#1e1e1e;font-weight:400;"><span style="color:#64727f;">                            //       of available courses from the database.</span></div>
<div class="t" style="left:889.0px;top:1629.6px;font-family:'Liberation Mono', monospace;font-size:30.83px;line-height:40px;color:#1e1e1e;font-weight:400;"><span style="color:#64727f;">                            //       So, it is safe to force unwrap.</span></div>
<div class="t" style="left:889.0px;top:1669.6px;font-family:'Liberation Mono', monospace;font-size:30.83px;line-height:40px;color:#1e1e1e;font-weight:400;"><span style="color:#1e1e1e;">                            </span><span style="color:#3d1fa8;">Text</span><span style="color:#1e1e1e;">(course.name).</span><span style="color:#7549b4;">tag</span><span style="color:#1e1e1e;">(course.id!)</span></div>
<div class="t" style="left:889.0px;top:1709.6px;font-family:'Liberation Mono', monospace;font-size:30.83px;line-height:40px;color:#1e1e1e;font-weight:400;"><span style="color:#1e1e1e;">                        }</span></div>
<div class="t" style="left:889.0px;top:1749.6px;font-family:'Liberation Mono', monospace;font-size:30.83px;line-height:40px;color:#1e1e1e;font-weight:400;"><span style="color:#1e1e1e;">                    }</span></div>
<div class="t" style="left:889.0px;top:1789.6px;font-family:'Liberation Mono', monospace;font-size:30.83px;line-height:40px;color:#1e1e1e;font-weight:400;"><span style="color:#1e1e1e;">                    .</span><span style="color:#7549b4;">pickerStyle</span><span style="color:#1e1e1e;">(.</span><span style="color:#7549b4;">navigationLink</span><span style="color:#1e1e1e;">)</span></div>
<div class="t" style="left:889.0px;top:1829.6px;font-family:'Liberation Mono', monospace;font-size:30.83px;line-height:40px;color:#1e1e1e;font-weight:400;"><span style="color:#1e1e1e;">                }</span></div>
<div class="t" style="left:889.0px;top:1869.6px;font-family:'Liberation Mono', monospace;font-size:30.83px;line-height:40px;color:#1e1e1e;font-weight:400;"><span style="color:#1e1e1e;">            }</span></div>
<div class="r" style="left:1492px;top:653.5px;width:811px;height:922.0px;background:#ececec;border-radius:12px;box-shadow:0 0 0 1px rgba(0,0,0,0.11), 0 8px 26px rgba(0,0,0,0.17)"></div>
<div class="t" style="left:1520.7px;top:670.1px;font-family:'Liberation Sans', sans-serif;font-size:27.1px;line-height:35px;color:#1f1f1f;font-weight:400;">Jump to Definition</div>
<div class="t" style="left:1520.7px;top:714.1px;font-family:'Liberation Sans', sans-serif;font-size:27.1px;line-height:35px;color:#1f1f1f;font-weight:400;">Show Callers…</div>
<div class="t" style="left:1520.7px;top:758.1px;font-family:'Liberation Sans', sans-serif;font-size:27.1px;line-height:35px;color:#1f1f1f;font-weight:400;">Show Quick Help</div>
<div class="t" style="left:1520.7px;top:802.1px;font-family:'Liberation Sans', sans-serif;font-size:27.1px;line-height:35px;color:#1f1f1f;font-weight:400;">Edit All in Scope</div>
<div class="t" style="left:1520.7px;top:846.1px;font-family:'Liberation Sans', sans-serif;font-size:27.1px;line-height:35px;color:#1f1f1f;font-weight:400;">Create Code Snippet…</div>
<div class="r" style="left:1520.7px;top:895.0px;width:755.0px;height:1.5px;background:#d6d6d6;"></div>
<div class="r" style="left:1502.0px;top:906.3px;width:791.0px;height:43.5px;background:#d4d4d4;border-radius:9px"></div>
<div class="t" style="left:1520.7px;top:912.1px;font-family:'Liberation Sans', sans-serif;font-size:27.1px;line-height:35px;color:#1f1f1f;font-weight:400;">Refactor</div>
<svg class="r" style="left:2260.0px;top:919.0px;" width="16" height="22" viewBox="0 0 16 22"><path d="M3.6,1.6 L11.4,9.5 L3.6,17.4" fill="none" stroke="#1e1e1e" stroke-width="3.3" stroke-linecap="round" stroke-linejoin="round"/></svg>
<div class="t" style="left:1520.7px;top:956.1px;font-family:'Liberation Sans', sans-serif;font-size:27.1px;line-height:35px;color:#1f1f1f;font-weight:400;">Find</div>
<svg class="r" style="left:2260.0px;top:963.0px;" width="16" height="22" viewBox="0 0 16 22"><path d="M3.6,1.6 L11.4,9.5 L3.6,17.4" fill="none" stroke="#1e1e1e" stroke-width="3.3" stroke-linecap="round" stroke-linejoin="round"/></svg>
<div class="t" style="left:1520.7px;top:1000.1px;font-family:'Liberation Sans', sans-serif;font-size:27.1px;line-height:35px;color:#1f1f1f;font-weight:400;">Navigate</div>
<svg class="r" style="left:2260.0px;top:1007.0px;" width="16" height="22" viewBox="0 0 16 22"><path d="M3.6,1.6 L11.4,9.5 L3.6,17.4" fill="none" stroke="#1e1e1e" stroke-width="3.3" stroke-linecap="round" stroke-linejoin="round"/></svg>
<div class="t" style="left:1520.7px;top:1044.1px;font-family:'Liberation Sans', sans-serif;font-size:27.1px;line-height:35px;color:#1f1f1f;font-weight:400;">Fold</div>
<div class="t" style="left:1520.7px;top:1088.1px;font-family:'Liberation Sans', sans-serif;font-size:27.1px;line-height:35px;color:#1f1f1f;font-weight:400;">Add Documentation</div>
<div class="r" style="left:1520.7px;top:1137.0px;width:755.0px;height:1.5px;background:#d6d6d6;"></div>
<div class="t" style="left:1520.7px;top:1154.1px;font-family:'Liberation Sans', sans-serif;font-size:27.1px;line-height:35px;color:#1f1f1f;font-weight:400;">Show Last Change for Line</div>
<div class="r" style="left:1520.7px;top:1203.0px;width:755.0px;height:1.5px;background:#d6d6d6;"></div>
<div class="t" style="left:1520.7px;top:1220.1px;font-family:'Liberation Sans', sans-serif;font-size:27.1px;line-height:35px;color:#1f1f1f;font-weight:400;">Bookmark “AddEnrolmentFromStudentView.swift” Line 10</div>
<div class="t" style="left:1520.7px;top:1264.1px;font-family:'Liberation Sans', sans-serif;font-size:27.1px;line-height:35px;color:#1f1f1f;font-weight:400;">Bookmark “AddEnrolmentFromStudentView.swift”</div>
<div class="r" style="left:1520.7px;top:1313.0px;width:755.0px;height:1.5px;background:#d6d6d6;"></div>
<div class="t" style="left:1520.7px;top:1330.1px;font-family:'Liberation Sans', sans-serif;font-size:27.1px;line-height:35px;color:#1f1f1f;font-weight:400;">Cut</div>
<div class="t" style="left:1520.7px;top:1374.1px;font-family:'Liberation Sans', sans-serif;font-size:27.1px;line-height:35px;color:#1f1f1f;font-weight:400;">Copy</div>
<svg class="r" style="left:2260.0px;top:1381.0px;" width="16" height="22" viewBox="0 0 16 22"><path d="M3.6,1.6 L11.4,9.5 L3.6,17.4" fill="none" stroke="#1e1e1e" stroke-width="3.3" stroke-linecap="round" stroke-linejoin="round"/></svg>
<div class="t" style="left:1520.7px;top:1418.1px;font-family:'Liberation Sans', sans-serif;font-size:27.1px;line-height:35px;color:#1f1f1f;font-weight:400;">Paste</div>
<div class="r" style="left:1520.7px;top:1467.0px;width:755.0px;height:1.5px;background:#d6d6d6;"></div>
<div class="t" style="left:1520.7px;top:1484.1px;font-family:'Liberation Sans', sans-serif;font-size:27.1px;line-height:35px;color:#1f1f1f;font-weight:400;">AutoFill</div>
<svg class="r" style="left:2260.0px;top:1491.0px;" width="16" height="22" viewBox="0 0 16 22"><path d="M3.6,1.6 L11.4,9.5 L3.6,17.4" fill="none" stroke="#1e1e1e" stroke-width="3.3" stroke-linecap="round" stroke-linejoin="round"/></svg>
<div class="t" style="left:1520.7px;top:1528.1px;font-family:'Liberation Sans', sans-serif;font-size:27.1px;line-height:35px;color:#1f1f1f;font-weight:400;">Services</div>
<svg class="r" style="left:2260.0px;top:1535.0px;" width="16" height="22" viewBox="0 0 16 22"><path d="M3.6,1.6 L11.4,9.5 L3.6,17.4" fill="none" stroke="#1e1e1e" stroke-width="3.3" stroke-linecap="round" stroke-linejoin="round"/></svg>
<div class="r" style="left:2293.5px;top:896px;width:518.5px;height:723.5px;background:#ececec;border-radius:12px;box-shadow:0 0 0 1px rgba(0,0,0,0.11), 0 8px 26px rgba(0,0,0,0.17)"></div>
<div class="r" style="left:2304.2px;top:906.5px;width:497.5px;height:43.5px;background:#2962d9;border-radius:10px"></div>
<div class="t" style="left:2323.0px;top:911.6px;font-family:'Liberation Sans', sans-serif;font-size:27.2px;line-height:35px;color:#ffffff;font-weight:400;">Rename…</div>
<div class="t" style="left:2323.0px;top:955.6px;font-family:'Liberation Sans', sans-serif;font-size:27.2px;line-height:35px;color:#a9a9a9;font-weight:400;">Extract to Function</div>
<div class="t" style="left:2323.0px;top:999.6px;font-family:'Liberation Sans', sans-serif;font-size:27.2px;line-height:35px;color:#a9a9a9;font-weight:400;">Extract to Method</div>
<div class="t" style="left:2323.0px;top:1043.6px;font-family:'Liberation Sans', sans-serif;font-size:27.2px;line-height:35px;color:#a9a9a9;font-weight:400;">Extract to Variable</div>
<div class="t" style="left:2323.0px;top:1087.6px;font-family:'Liberation Sans', sans-serif;font-size:27.2px;line-height:35px;color:#a9a9a9;font-weight:400;">Extract All Occurrences</div>
<div class="r" style="left:2322.0px;top:1136.5px;width:461.5px;height:1.5px;background:#d6d6d6;"></div>
<div class="t" style="left:2323.0px;top:1153.6px;font-family:'Liberation Sans', sans-serif;font-size:27.2px;line-height:35px;color:#a9a9a9;font-weight:400;">Add Missing Abstract Class Overrides</div>
<div class="t" style="left:2323.0px;top:1197.6px;font-family:'Liberation Sans', sans-serif;font-size:27.2px;line-height:35px;color:#a9a9a9;font-weight:400;">Add Missing Protocol Requirements</div>
<div class="t" style="left:2323.0px;top:1241.6px;font-family:'Liberation Sans', sans-serif;font-size:27.2px;line-height:35px;color:#a9a9a9;font-weight:400;">Add Missing Switch Cases</div>
<div class="t" style="left:2323.0px;top:1285.6px;font-family:'Liberation Sans', sans-serif;font-size:27.2px;line-height:35px;color:#a9a9a9;font-weight:400;">Convert to Switch</div>
<div class="t" style="left:2323.0px;top:1329.6px;font-family:'Liberation Sans', sans-serif;font-size:27.2px;line-height:35px;color:#a9a9a9;font-weight:400;">Convert to Regex Builder</div>
<div class="t" style="left:2323.0px;top:1373.6px;font-family:'Liberation Sans', sans-serif;font-size:27.2px;line-height:35px;color:#a9a9a9;font-weight:400;">Expand Default</div>
<div class="t" style="left:2323.0px;top:1417.6px;font-family:'Liberation Sans', sans-serif;font-size:27.2px;line-height:35px;color:#1f1f1f;font-weight:400;">Generate Memberwise Initializer</div>
<div class="t" style="left:2323.0px;top:1461.6px;font-family:'Liberation Sans', sans-serif;font-size:27.2px;line-height:35px;color:#a9a9a9;font-weight:400;">Generate Missing Function Definitions</div>
<div class="t" style="left:2323.0px;top:1505.6px;font-family:'Liberation Sans', sans-serif;font-size:27.2px;line-height:35px;color:#a9a9a9;font-weight:400;">Wrap in NSLocalizedString</div>
<div class="r" style="left:2322.0px;top:1554.5px;width:461.5px;height:1.5px;background:#d6d6d6;"></div>
<div class="t" style="left:2323.0px;top:1571.6px;font-family:'Liberation Sans', sans-serif;font-size:27.2px;line-height:35px;color:#1f1f1f;font-weight:400;">Add Equatable Conformance</div>
<svg class="r" style="left:2186.0px;top:27.0px;" width="12" height="20" viewBox="0 0 12 20"><path d="M10,2 L2,10 L10,18" fill="none" stroke="#1e1e1e" stroke-width="2.6" stroke-linecap="round" stroke-linejoin="round"/></svg>
<svg class="r" style="left:2240.0px;top:20.0px;" width="34" height="34" viewBox="0 0 34 34"><path d="M32,2 C22,2 15,8 11,15 L5,15 L2,20 L9,20 L14,25 L14,32 L19,29 L19,23 C26,19 32,12 32,2 Z" fill="#1e1e1e"/><circle cx="23" cy="11" r="3" fill="#dadada"/></svg>
<svg class="r" style="left:2310.0px;top:15.0px;" width="44" height="42" viewBox="0 0 44 42"><path d="M5,16.5 Q3.5,14 6.5,14.2 L27,17.5 L20.5,39 Q19.5,41 18,39.2 Z" fill="#1e1e1e"/><path d="M26,23.5 L19.5,37" stroke="#dadada" stroke-width="1.8" stroke-linecap="round"/><circle cx="30.5" cy="13.5" r="10" fill="#1e1e1e"/><path d="M27,10 L34,17 M34,10 L27,17" stroke="#dadada" stroke-width="2.4" stroke-linecap="round"/></svg>
<svg class="r" style="left:2389.0px;top:24.0px;" width="37" height="26" viewBox="0 0 37 26"><path d="M3,10 L3,4 Q3,1 6,1 L31,1 Q34,1 34,4 L34,10 Z" fill="#1e1e1e"/><rect x="8" y="5" width="9" height="5" rx="2" fill="#dadada"/><rect x="20" y="5" width="9" height="5" rx="2" fill="#dadada"/><path d="M0,12 L37,12 L37,21 L34,21 L34,25 L31,25 L31,21 L6,21 L6,25 L3,25 L3,21 L0,21 Z" fill="#1e1e1e"/></svg>
<svg class="r" style="left:2460.0px;top:22.0px;" width="32" height="32" viewBox="0 0 32 32"><circle cx="16" cy="16" r="15.5" fill="#1e1e1e"/><rect x="0" y="13.5" width="32" height="5" fill="#dadada"/></svg>
<svg class="r" style="left:2530.0px;top:22.0px;" width="32" height="32" viewBox="0 0 32 32"><circle cx="16" cy="16" r="15.5" fill="#1e1e1e"/><g fill="#777"><circle cx="10" cy="8" r="2"/><circle cx="19" cy="6" r="1.5"/><circle cx="24" cy="12" r="2.2"/><circle cx="8" cy="17" r="1.5"/><circle cx="15" cy="15" r="2.5"/><circle cx="22" cy="21" r="1.8"/><circle cx="12" cy="24" r="2.2"/></g></svg>
<svg class="r" style="left:2600.0px;top:23.0px;" width="52" height="28" viewBox="0 0 52 28"><rect x="1.5" y="2" width="44" height="24" rx="6" fill="none" stroke="#777" stroke-width="2"/><rect x="4.5" y="5" width="38" height="18" rx="3.5" fill="#1e1e1e"/><path d="M48,10 L50,11 L50,17 L48,18 Z" fill="#777"/><path d="M19,1 L19,8 M27,1 L27,8 M16,8 L30,8 L30,14 Q30,19 23,19 Q16,19 16,14 Z M23,19 L23,28" stroke="#dadada" stroke-width="4" fill="none"/><path d="M19,1 L19,8 M27,1 L27,8 M23,19 L23,28" stroke="#1e1e1e" stroke-width="2.4" fill="none"/><path d="M16,8 L30,8 L30,14 Q30,19 23,19 Q16,19 16,14 Z" fill="#1e1e1e"/></svg>
<svg class="r" style="left:2688.0px;top:22.0px;" width="36" height="28" viewBox="0 0 36 28"><path d="M2,10 Q18,-4 34,10" fill="none" stroke="#1e1e1e" stroke-width="3.6" stroke-linecap="round"/><path d="M8,16 Q18,7 28,16" fill="none" stroke="#1e1e1e" stroke-width="3.6" stroke-linecap="round"/><path d="M13,22 L18,27 L23,22 Q18,18 13,22 Z" fill="#1e1e1e"/></svg>
<svg class="r" style="left:2761.0px;top:24.0px;" width="29" height="29" viewBox="0 0 29 29"><circle cx="11.5" cy="11.5" r="9" fill="none" stroke="#1e1e1e" stroke-width="3"/><line x1="18.5" y1="18.5" x2="26" y2="26" stroke="#1e1e1e" stroke-width="3.4" stroke-linecap="round"/></svg>
<svg class="r" style="left:2825.0px;top:20.0px;" width="30" height="33" viewBox="0 0 30 33"><path d="M1,14 Q2,2 15,2 Q28,2 29,14 Q26,11 22,13 Q19,10 15,12 Q11,10 8,13 Q4,11 1,14 Z" fill="#1e1e1e"/><path d="M15,2 L15,0 M15,12 L15,28 Q15,31 12,31 Q9.5,31 9.5,28" fill="none" stroke="#1e1e1e" stroke-width="2.4" stroke-linecap="round"/></svg>
<svg class="r" style="left:2882.0px;top:23.0px;" width="28" height="28" viewBox="0 0 28 28"><rect x="1" y="1" width="26" height="11" rx="5.5" fill="none" stroke="#1e1e1e" stroke-width="2.2"/><circle cx="7.5" cy="6.5" r="2.8" fill="#1e1e1e"/><rect x="0" y="15" width="28" height="13" rx="6.5" fill="#1e1e1e"/><circle cx="21.5" cy="21.5" r="3.3" fill="#dadada"/></svg>
<div class="r" style="left:2919.5px;top:32.0px;width:10.0px;height:10.0px;background:#62c462;border-radius:5px"></div>
<svg class="r" style="left:2955.0px;top:18.0px;" width="38" height="38" viewBox="0 0 38 38"><circle cx="19" cy="19" r="17.5" fill="none" stroke="#1e1e1e" stroke-width="2.2"/><path d="M15,24 L21,17 L21.5,22" fill="none" stroke="#1e1e1e" stroke-width="2" stroke-linecap="round"/></svg>
<svg class="r" style="left:0.0px;top:76.0px;" width="20" height="20" viewBox="0 0 20 20"><path d="M0,0 L20,0 A20,20 0 0 0 0,20 Z" fill="#000" transform="rotate(0 10 10)"/></svg>
<svg class="r" style="left:3004.0px;top:76.0px;" width="20" height="20" viewBox="0 0 20 20"><path d="M0,0 L20,0 A20,20 0 0 0 0,20 Z" fill="#9c9868" transform="rotate(90 10 10)"/></svg>
<svg class="r" style="left:3004.0px;top:1944.0px;" width="20" height="20" viewBox="0 0 20 20"><path d="M0,0 L20,0 A20,20 0 0 0 0,20 Z" fill="#000" transform="rotate(180 10 10)"/></svg>
<svg class="r" style="left:0.0px;top:1944.0px;" width="20" height="20" viewBox="0 0 20 20"><path d="M0,0 L20,0 A20,20 0 0 0 0,20 Z" fill="#000" transform="rotate(270 10 10)"/></svg>
</body></html>
